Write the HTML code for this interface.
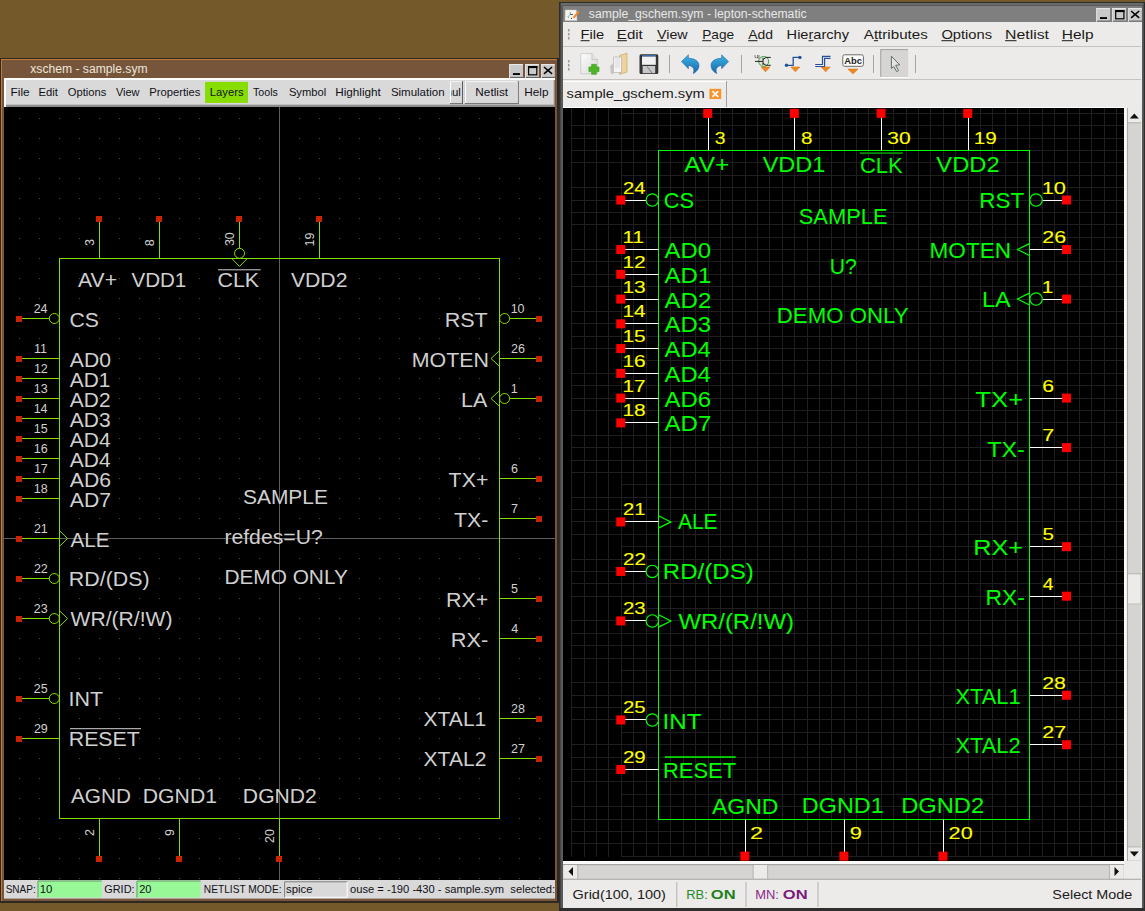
<!DOCTYPE html>
<html><head><meta charset="utf-8"><style>
html,body{margin:0;padding:0;background:#745a2a;overflow:hidden;}
svg{display:block;}
text{font-family:"Liberation Sans",sans-serif;}
</style></head><body>
<svg width="1145" height="911" viewBox="0 0 1145 911">
<rect x="0.00" y="0.00" width="1145.00" height="911.00" fill="#745a2a" />
<rect x="0.00" y="58.00" width="560.00" height="845.00" fill="#2e2822" />
<rect x="1.00" y="59.00" width="556.00" height="842.00" fill="#c27a36" />
<rect x="2.00" y="60.00" width="555.00" height="841.00" fill="#76553a" />
<text transform="matrix(0.9717,0,0,1,30.26,73.20)" font-size="12.5" fill="#ece6dc" font-weight="normal" font-family="Liberation Sans" >xschem - sample.sym</text>
<rect x="509.10" y="64.10" width="13.90" height="13.80" fill="#c9c9c9" />
<rect x="509.10" y="64.10" width="13.90" height="1.00" fill="#ececec" />
<rect x="509.10" y="64.10" width="1.00" height="13.80" fill="#e2e2e2" />
<rect x="510.10" y="76.90" width="12.90" height="1.00" fill="#5a5a5a" />
<rect x="512.90" y="73.10" width="7.00" height="1.90" fill="#000" />
<rect x="525.00" y="64.10" width="13.90" height="13.80" fill="#c9c9c9" />
<rect x="525.00" y="64.10" width="13.90" height="1.00" fill="#ececec" />
<rect x="525.00" y="64.10" width="1.00" height="13.80" fill="#e2e2e2" />
<rect x="526.00" y="76.90" width="12.90" height="1.00" fill="#5a5a5a" />
<rect x="528.60" y="66.60" width="8.20" height="8.20" fill="none" stroke="#000" stroke-width="1.2"/>
<rect x="528.00" y="66.00" width="9.40" height="2.10" fill="#000" />
<rect x="541.10" y="64.10" width="13.70" height="13.80" fill="#c9c9c9" />
<rect x="541.10" y="64.10" width="13.70" height="1.00" fill="#ececec" />
<rect x="541.10" y="64.10" width="1.00" height="13.80" fill="#e2e2e2" />
<rect x="542.10" y="76.90" width="12.70" height="1.00" fill="#5a5a5a" />
<path d="M544.00 67.00 L552.10 73.90 M552.10 67.00 L544.00 73.90" stroke="#000" stroke-width="1.6"/>
<rect x="4.00" y="78.00" width="551.00" height="29.00" fill="#ffffff" />
<rect x="6.00" y="80.00" width="549.00" height="27.00" fill="#8c8c8c" />
<rect x="6.00" y="80.00" width="547.70" height="24.70" fill="#d9d9d9" />
<text transform="matrix(1.0397,0,0,1,10.53,95.70)" font-size="11.4" fill="#101018" font-weight="normal" font-family="Liberation Sans" >File</text>
<text transform="matrix(0.9879,0,0,1,38.58,95.70)" font-size="11.4" fill="#101018" font-weight="normal" font-family="Liberation Sans" >Edit</text>
<text transform="matrix(0.9782,0,0,1,67.87,95.70)" font-size="11.4" fill="#101018" font-weight="normal" font-family="Liberation Sans" >Options</text>
<text transform="matrix(0.9641,0,0,1,115.95,95.70)" font-size="11.4" fill="#101018" font-weight="normal" font-family="Liberation Sans" >View</text>
<text transform="matrix(0.9860,0,0,1,149.28,95.70)" font-size="11.4" fill="#101018" font-weight="normal" font-family="Liberation Sans" >Properties</text>
<text transform="matrix(0.9299,0,0,1,253.06,95.70)" font-size="11.4" fill="#101018" font-weight="normal" font-family="Liberation Sans" >Tools</text>
<text transform="matrix(0.9855,0,0,1,288.89,95.70)" font-size="11.4" fill="#101018" font-weight="normal" font-family="Liberation Sans" >Symbol</text>
<text transform="matrix(1.0291,0,0,1,335.24,95.70)" font-size="11.4" fill="#101018" font-weight="normal" font-family="Liberation Sans" >Highlight</text>
<text transform="matrix(1.0102,0,0,1,390.88,95.70)" font-size="11.4" fill="#101018" font-weight="normal" font-family="Liberation Sans" >Simulation</text>
<text transform="matrix(1.0349,0,0,1,524.23,95.70)" font-size="11.4" fill="#101018" font-weight="normal" font-family="Liberation Sans" >Help</text>
<rect x="205.00" y="81.90" width="43.00" height="21.00" fill="#88dd00" />
<text transform="matrix(0.9888,0,0,1,209.78,95.70)" font-size="11.4" fill="#101018" font-weight="normal" font-family="Liberation Sans" >Layers</text>
<rect x="450.00" y="81.10" width="13.00" height="23.00" fill="#5c5c5c" />
<rect x="450.00" y="81.10" width="12.00" height="22.00" fill="#ffffff" />
<rect x="451.00" y="82.10" width="11.00" height="21.00" fill="#d9d9d9" />
<svg x="451" y="82" width="10.5" height="20"><text x="-8.5" y="13.7" font-size="11.4" fill="#101018" font-family="Liberation Sans">mul</text></svg>
<rect x="464.90" y="81.10" width="53.80" height="23.00" fill="#5c5c5c" />
<rect x="464.90" y="81.10" width="52.80" height="22.00" fill="#ffffff" />
<rect x="465.90" y="82.10" width="51.80" height="21.00" fill="#d9d9d9" />
<text transform="matrix(1.0341,0,0,1,475.33,95.70)" font-size="11.4" fill="#101018" font-weight="normal" font-family="Liberation Sans" >Netlist</text>
<rect x="4.00" y="107.00" width="551.00" height="773.00" fill="#000000" />
<path d="M19 118h1v1h-1zM19 138h1v1h-1zM19 158h1v1h-1zM19 178h1v1h-1zM19 198h1v1h-1zM19 218h1v1h-1zM19 238h1v1h-1zM19 258h1v1h-1zM19 278h1v1h-1zM19 298h1v1h-1zM19 318h1v1h-1zM19 338h1v1h-1zM19 358h1v1h-1zM19 378h1v1h-1zM19 398h1v1h-1zM19 418h1v1h-1zM19 438h1v1h-1zM19 458h1v1h-1zM19 478h1v1h-1zM19 498h1v1h-1zM19 518h1v1h-1zM19 538h1v1h-1zM19 558h1v1h-1zM19 578h1v1h-1zM19 598h1v1h-1zM19 618h1v1h-1zM19 638h1v1h-1zM19 658h1v1h-1zM19 678h1v1h-1zM19 698h1v1h-1zM19 718h1v1h-1zM19 738h1v1h-1zM19 758h1v1h-1zM19 778h1v1h-1zM19 798h1v1h-1zM19 818h1v1h-1zM19 838h1v1h-1zM19 858h1v1h-1zM19 878h1v1h-1zM39 118h1v1h-1zM39 138h1v1h-1zM39 158h1v1h-1zM39 178h1v1h-1zM39 198h1v1h-1zM39 218h1v1h-1zM39 238h1v1h-1zM39 258h1v1h-1zM39 278h1v1h-1zM39 298h1v1h-1zM39 318h1v1h-1zM39 338h1v1h-1zM39 358h1v1h-1zM39 378h1v1h-1zM39 398h1v1h-1zM39 418h1v1h-1zM39 438h1v1h-1zM39 458h1v1h-1zM39 478h1v1h-1zM39 498h1v1h-1zM39 518h1v1h-1zM39 538h1v1h-1zM39 558h1v1h-1zM39 578h1v1h-1zM39 598h1v1h-1zM39 618h1v1h-1zM39 638h1v1h-1zM39 658h1v1h-1zM39 678h1v1h-1zM39 698h1v1h-1zM39 718h1v1h-1zM39 738h1v1h-1zM39 758h1v1h-1zM39 778h1v1h-1zM39 798h1v1h-1zM39 818h1v1h-1zM39 838h1v1h-1zM39 858h1v1h-1zM39 878h1v1h-1zM59 118h1v1h-1zM59 138h1v1h-1zM59 158h1v1h-1zM59 178h1v1h-1zM59 198h1v1h-1zM59 218h1v1h-1zM59 238h1v1h-1zM59 258h1v1h-1zM59 278h1v1h-1zM59 298h1v1h-1zM59 318h1v1h-1zM59 338h1v1h-1zM59 358h1v1h-1zM59 378h1v1h-1zM59 398h1v1h-1zM59 418h1v1h-1zM59 438h1v1h-1zM59 458h1v1h-1zM59 478h1v1h-1zM59 498h1v1h-1zM59 518h1v1h-1zM59 538h1v1h-1zM59 558h1v1h-1zM59 578h1v1h-1zM59 598h1v1h-1zM59 618h1v1h-1zM59 638h1v1h-1zM59 658h1v1h-1zM59 678h1v1h-1zM59 698h1v1h-1zM59 718h1v1h-1zM59 738h1v1h-1zM59 758h1v1h-1zM59 778h1v1h-1zM59 798h1v1h-1zM59 818h1v1h-1zM59 838h1v1h-1zM59 858h1v1h-1zM59 878h1v1h-1zM79 118h1v1h-1zM79 138h1v1h-1zM79 158h1v1h-1zM79 178h1v1h-1zM79 198h1v1h-1zM79 218h1v1h-1zM79 238h1v1h-1zM79 258h1v1h-1zM79 278h1v1h-1zM79 298h1v1h-1zM79 318h1v1h-1zM79 338h1v1h-1zM79 358h1v1h-1zM79 378h1v1h-1zM79 398h1v1h-1zM79 418h1v1h-1zM79 438h1v1h-1zM79 458h1v1h-1zM79 478h1v1h-1zM79 498h1v1h-1zM79 518h1v1h-1zM79 538h1v1h-1zM79 558h1v1h-1zM79 578h1v1h-1zM79 598h1v1h-1zM79 618h1v1h-1zM79 638h1v1h-1zM79 658h1v1h-1zM79 678h1v1h-1zM79 698h1v1h-1zM79 718h1v1h-1zM79 738h1v1h-1zM79 758h1v1h-1zM79 778h1v1h-1zM79 798h1v1h-1zM79 818h1v1h-1zM79 838h1v1h-1zM79 858h1v1h-1zM79 878h1v1h-1zM99 118h1v1h-1zM99 138h1v1h-1zM99 158h1v1h-1zM99 178h1v1h-1zM99 198h1v1h-1zM99 218h1v1h-1zM99 238h1v1h-1zM99 258h1v1h-1zM99 278h1v1h-1zM99 298h1v1h-1zM99 318h1v1h-1zM99 338h1v1h-1zM99 358h1v1h-1zM99 378h1v1h-1zM99 398h1v1h-1zM99 418h1v1h-1zM99 438h1v1h-1zM99 458h1v1h-1zM99 478h1v1h-1zM99 498h1v1h-1zM99 518h1v1h-1zM99 538h1v1h-1zM99 558h1v1h-1zM99 578h1v1h-1zM99 598h1v1h-1zM99 618h1v1h-1zM99 638h1v1h-1zM99 658h1v1h-1zM99 678h1v1h-1zM99 698h1v1h-1zM99 718h1v1h-1zM99 738h1v1h-1zM99 758h1v1h-1zM99 778h1v1h-1zM99 798h1v1h-1zM99 818h1v1h-1zM99 838h1v1h-1zM99 858h1v1h-1zM99 878h1v1h-1zM119 118h1v1h-1zM119 138h1v1h-1zM119 158h1v1h-1zM119 178h1v1h-1zM119 198h1v1h-1zM119 218h1v1h-1zM119 238h1v1h-1zM119 258h1v1h-1zM119 278h1v1h-1zM119 298h1v1h-1zM119 318h1v1h-1zM119 338h1v1h-1zM119 358h1v1h-1zM119 378h1v1h-1zM119 398h1v1h-1zM119 418h1v1h-1zM119 438h1v1h-1zM119 458h1v1h-1zM119 478h1v1h-1zM119 498h1v1h-1zM119 518h1v1h-1zM119 538h1v1h-1zM119 558h1v1h-1zM119 578h1v1h-1zM119 598h1v1h-1zM119 618h1v1h-1zM119 638h1v1h-1zM119 658h1v1h-1zM119 678h1v1h-1zM119 698h1v1h-1zM119 718h1v1h-1zM119 738h1v1h-1zM119 758h1v1h-1zM119 778h1v1h-1zM119 798h1v1h-1zM119 818h1v1h-1zM119 838h1v1h-1zM119 858h1v1h-1zM119 878h1v1h-1zM139 118h1v1h-1zM139 138h1v1h-1zM139 158h1v1h-1zM139 178h1v1h-1zM139 198h1v1h-1zM139 218h1v1h-1zM139 238h1v1h-1zM139 258h1v1h-1zM139 278h1v1h-1zM139 298h1v1h-1zM139 318h1v1h-1zM139 338h1v1h-1zM139 358h1v1h-1zM139 378h1v1h-1zM139 398h1v1h-1zM139 418h1v1h-1zM139 438h1v1h-1zM139 458h1v1h-1zM139 478h1v1h-1zM139 498h1v1h-1zM139 518h1v1h-1zM139 538h1v1h-1zM139 558h1v1h-1zM139 578h1v1h-1zM139 598h1v1h-1zM139 618h1v1h-1zM139 638h1v1h-1zM139 658h1v1h-1zM139 678h1v1h-1zM139 698h1v1h-1zM139 718h1v1h-1zM139 738h1v1h-1zM139 758h1v1h-1zM139 778h1v1h-1zM139 798h1v1h-1zM139 818h1v1h-1zM139 838h1v1h-1zM139 858h1v1h-1zM139 878h1v1h-1zM159 118h1v1h-1zM159 138h1v1h-1zM159 158h1v1h-1zM159 178h1v1h-1zM159 198h1v1h-1zM159 218h1v1h-1zM159 238h1v1h-1zM159 258h1v1h-1zM159 278h1v1h-1zM159 298h1v1h-1zM159 318h1v1h-1zM159 338h1v1h-1zM159 358h1v1h-1zM159 378h1v1h-1zM159 398h1v1h-1zM159 418h1v1h-1zM159 438h1v1h-1zM159 458h1v1h-1zM159 478h1v1h-1zM159 498h1v1h-1zM159 518h1v1h-1zM159 538h1v1h-1zM159 558h1v1h-1zM159 578h1v1h-1zM159 598h1v1h-1zM159 618h1v1h-1zM159 638h1v1h-1zM159 658h1v1h-1zM159 678h1v1h-1zM159 698h1v1h-1zM159 718h1v1h-1zM159 738h1v1h-1zM159 758h1v1h-1zM159 778h1v1h-1zM159 798h1v1h-1zM159 818h1v1h-1zM159 838h1v1h-1zM159 858h1v1h-1zM159 878h1v1h-1zM179 118h1v1h-1zM179 138h1v1h-1zM179 158h1v1h-1zM179 178h1v1h-1zM179 198h1v1h-1zM179 218h1v1h-1zM179 238h1v1h-1zM179 258h1v1h-1zM179 278h1v1h-1zM179 298h1v1h-1zM179 318h1v1h-1zM179 338h1v1h-1zM179 358h1v1h-1zM179 378h1v1h-1zM179 398h1v1h-1zM179 418h1v1h-1zM179 438h1v1h-1zM179 458h1v1h-1zM179 478h1v1h-1zM179 498h1v1h-1zM179 518h1v1h-1zM179 538h1v1h-1zM179 558h1v1h-1zM179 578h1v1h-1zM179 598h1v1h-1zM179 618h1v1h-1zM179 638h1v1h-1zM179 658h1v1h-1zM179 678h1v1h-1zM179 698h1v1h-1zM179 718h1v1h-1zM179 738h1v1h-1zM179 758h1v1h-1zM179 778h1v1h-1zM179 798h1v1h-1zM179 818h1v1h-1zM179 838h1v1h-1zM179 858h1v1h-1zM179 878h1v1h-1zM199 118h1v1h-1zM199 138h1v1h-1zM199 158h1v1h-1zM199 178h1v1h-1zM199 198h1v1h-1zM199 218h1v1h-1zM199 238h1v1h-1zM199 258h1v1h-1zM199 278h1v1h-1zM199 298h1v1h-1zM199 318h1v1h-1zM199 338h1v1h-1zM199 358h1v1h-1zM199 378h1v1h-1zM199 398h1v1h-1zM199 418h1v1h-1zM199 438h1v1h-1zM199 458h1v1h-1zM199 478h1v1h-1zM199 498h1v1h-1zM199 518h1v1h-1zM199 538h1v1h-1zM199 558h1v1h-1zM199 578h1v1h-1zM199 598h1v1h-1zM199 618h1v1h-1zM199 638h1v1h-1zM199 658h1v1h-1zM199 678h1v1h-1zM199 698h1v1h-1zM199 718h1v1h-1zM199 738h1v1h-1zM199 758h1v1h-1zM199 778h1v1h-1zM199 798h1v1h-1zM199 818h1v1h-1zM199 838h1v1h-1zM199 858h1v1h-1zM199 878h1v1h-1zM219 118h1v1h-1zM219 138h1v1h-1zM219 158h1v1h-1zM219 178h1v1h-1zM219 198h1v1h-1zM219 218h1v1h-1zM219 238h1v1h-1zM219 258h1v1h-1zM219 278h1v1h-1zM219 298h1v1h-1zM219 318h1v1h-1zM219 338h1v1h-1zM219 358h1v1h-1zM219 378h1v1h-1zM219 398h1v1h-1zM219 418h1v1h-1zM219 438h1v1h-1zM219 458h1v1h-1zM219 478h1v1h-1zM219 498h1v1h-1zM219 518h1v1h-1zM219 538h1v1h-1zM219 558h1v1h-1zM219 578h1v1h-1zM219 598h1v1h-1zM219 618h1v1h-1zM219 638h1v1h-1zM219 658h1v1h-1zM219 678h1v1h-1zM219 698h1v1h-1zM219 718h1v1h-1zM219 738h1v1h-1zM219 758h1v1h-1zM219 778h1v1h-1zM219 798h1v1h-1zM219 818h1v1h-1zM219 838h1v1h-1zM219 858h1v1h-1zM219 878h1v1h-1zM239 118h1v1h-1zM239 138h1v1h-1zM239 158h1v1h-1zM239 178h1v1h-1zM239 198h1v1h-1zM239 218h1v1h-1zM239 238h1v1h-1zM239 258h1v1h-1zM239 278h1v1h-1zM239 298h1v1h-1zM239 318h1v1h-1zM239 338h1v1h-1zM239 358h1v1h-1zM239 378h1v1h-1zM239 398h1v1h-1zM239 418h1v1h-1zM239 438h1v1h-1zM239 458h1v1h-1zM239 478h1v1h-1zM239 498h1v1h-1zM239 518h1v1h-1zM239 538h1v1h-1zM239 558h1v1h-1zM239 578h1v1h-1zM239 598h1v1h-1zM239 618h1v1h-1zM239 638h1v1h-1zM239 658h1v1h-1zM239 678h1v1h-1zM239 698h1v1h-1zM239 718h1v1h-1zM239 738h1v1h-1zM239 758h1v1h-1zM239 778h1v1h-1zM239 798h1v1h-1zM239 818h1v1h-1zM239 838h1v1h-1zM239 858h1v1h-1zM239 878h1v1h-1zM259 118h1v1h-1zM259 138h1v1h-1zM259 158h1v1h-1zM259 178h1v1h-1zM259 198h1v1h-1zM259 218h1v1h-1zM259 238h1v1h-1zM259 258h1v1h-1zM259 278h1v1h-1zM259 298h1v1h-1zM259 318h1v1h-1zM259 338h1v1h-1zM259 358h1v1h-1zM259 378h1v1h-1zM259 398h1v1h-1zM259 418h1v1h-1zM259 438h1v1h-1zM259 458h1v1h-1zM259 478h1v1h-1zM259 498h1v1h-1zM259 518h1v1h-1zM259 538h1v1h-1zM259 558h1v1h-1zM259 578h1v1h-1zM259 598h1v1h-1zM259 618h1v1h-1zM259 638h1v1h-1zM259 658h1v1h-1zM259 678h1v1h-1zM259 698h1v1h-1zM259 718h1v1h-1zM259 738h1v1h-1zM259 758h1v1h-1zM259 778h1v1h-1zM259 798h1v1h-1zM259 818h1v1h-1zM259 838h1v1h-1zM259 858h1v1h-1zM259 878h1v1h-1zM279 118h1v1h-1zM279 138h1v1h-1zM279 158h1v1h-1zM279 178h1v1h-1zM279 198h1v1h-1zM279 218h1v1h-1zM279 238h1v1h-1zM279 258h1v1h-1zM279 278h1v1h-1zM279 298h1v1h-1zM279 318h1v1h-1zM279 338h1v1h-1zM279 358h1v1h-1zM279 378h1v1h-1zM279 398h1v1h-1zM279 418h1v1h-1zM279 438h1v1h-1zM279 458h1v1h-1zM279 478h1v1h-1zM279 498h1v1h-1zM279 518h1v1h-1zM279 538h1v1h-1zM279 558h1v1h-1zM279 578h1v1h-1zM279 598h1v1h-1zM279 618h1v1h-1zM279 638h1v1h-1zM279 658h1v1h-1zM279 678h1v1h-1zM279 698h1v1h-1zM279 718h1v1h-1zM279 738h1v1h-1zM279 758h1v1h-1zM279 778h1v1h-1zM279 798h1v1h-1zM279 818h1v1h-1zM279 838h1v1h-1zM279 858h1v1h-1zM279 878h1v1h-1zM299 118h1v1h-1zM299 138h1v1h-1zM299 158h1v1h-1zM299 178h1v1h-1zM299 198h1v1h-1zM299 218h1v1h-1zM299 238h1v1h-1zM299 258h1v1h-1zM299 278h1v1h-1zM299 298h1v1h-1zM299 318h1v1h-1zM299 338h1v1h-1zM299 358h1v1h-1zM299 378h1v1h-1zM299 398h1v1h-1zM299 418h1v1h-1zM299 438h1v1h-1zM299 458h1v1h-1zM299 478h1v1h-1zM299 498h1v1h-1zM299 518h1v1h-1zM299 538h1v1h-1zM299 558h1v1h-1zM299 578h1v1h-1zM299 598h1v1h-1zM299 618h1v1h-1zM299 638h1v1h-1zM299 658h1v1h-1zM299 678h1v1h-1zM299 698h1v1h-1zM299 718h1v1h-1zM299 738h1v1h-1zM299 758h1v1h-1zM299 778h1v1h-1zM299 798h1v1h-1zM299 818h1v1h-1zM299 838h1v1h-1zM299 858h1v1h-1zM299 878h1v1h-1zM319 118h1v1h-1zM319 138h1v1h-1zM319 158h1v1h-1zM319 178h1v1h-1zM319 198h1v1h-1zM319 218h1v1h-1zM319 238h1v1h-1zM319 258h1v1h-1zM319 278h1v1h-1zM319 298h1v1h-1zM319 318h1v1h-1zM319 338h1v1h-1zM319 358h1v1h-1zM319 378h1v1h-1zM319 398h1v1h-1zM319 418h1v1h-1zM319 438h1v1h-1zM319 458h1v1h-1zM319 478h1v1h-1zM319 498h1v1h-1zM319 518h1v1h-1zM319 538h1v1h-1zM319 558h1v1h-1zM319 578h1v1h-1zM319 598h1v1h-1zM319 618h1v1h-1zM319 638h1v1h-1zM319 658h1v1h-1zM319 678h1v1h-1zM319 698h1v1h-1zM319 718h1v1h-1zM319 738h1v1h-1zM319 758h1v1h-1zM319 778h1v1h-1zM319 798h1v1h-1zM319 818h1v1h-1zM319 838h1v1h-1zM319 858h1v1h-1zM319 878h1v1h-1zM339 118h1v1h-1zM339 138h1v1h-1zM339 158h1v1h-1zM339 178h1v1h-1zM339 198h1v1h-1zM339 218h1v1h-1zM339 238h1v1h-1zM339 258h1v1h-1zM339 278h1v1h-1zM339 298h1v1h-1zM339 318h1v1h-1zM339 338h1v1h-1zM339 358h1v1h-1zM339 378h1v1h-1zM339 398h1v1h-1zM339 418h1v1h-1zM339 438h1v1h-1zM339 458h1v1h-1zM339 478h1v1h-1zM339 498h1v1h-1zM339 518h1v1h-1zM339 538h1v1h-1zM339 558h1v1h-1zM339 578h1v1h-1zM339 598h1v1h-1zM339 618h1v1h-1zM339 638h1v1h-1zM339 658h1v1h-1zM339 678h1v1h-1zM339 698h1v1h-1zM339 718h1v1h-1zM339 738h1v1h-1zM339 758h1v1h-1zM339 778h1v1h-1zM339 798h1v1h-1zM339 818h1v1h-1zM339 838h1v1h-1zM339 858h1v1h-1zM339 878h1v1h-1zM359 118h1v1h-1zM359 138h1v1h-1zM359 158h1v1h-1zM359 178h1v1h-1zM359 198h1v1h-1zM359 218h1v1h-1zM359 238h1v1h-1zM359 258h1v1h-1zM359 278h1v1h-1zM359 298h1v1h-1zM359 318h1v1h-1zM359 338h1v1h-1zM359 358h1v1h-1zM359 378h1v1h-1zM359 398h1v1h-1zM359 418h1v1h-1zM359 438h1v1h-1zM359 458h1v1h-1zM359 478h1v1h-1zM359 498h1v1h-1zM359 518h1v1h-1zM359 538h1v1h-1zM359 558h1v1h-1zM359 578h1v1h-1zM359 598h1v1h-1zM359 618h1v1h-1zM359 638h1v1h-1zM359 658h1v1h-1zM359 678h1v1h-1zM359 698h1v1h-1zM359 718h1v1h-1zM359 738h1v1h-1zM359 758h1v1h-1zM359 778h1v1h-1zM359 798h1v1h-1zM359 818h1v1h-1zM359 838h1v1h-1zM359 858h1v1h-1zM359 878h1v1h-1zM379 118h1v1h-1zM379 138h1v1h-1zM379 158h1v1h-1zM379 178h1v1h-1zM379 198h1v1h-1zM379 218h1v1h-1zM379 238h1v1h-1zM379 258h1v1h-1zM379 278h1v1h-1zM379 298h1v1h-1zM379 318h1v1h-1zM379 338h1v1h-1zM379 358h1v1h-1zM379 378h1v1h-1zM379 398h1v1h-1zM379 418h1v1h-1zM379 438h1v1h-1zM379 458h1v1h-1zM379 478h1v1h-1zM379 498h1v1h-1zM379 518h1v1h-1zM379 538h1v1h-1zM379 558h1v1h-1zM379 578h1v1h-1zM379 598h1v1h-1zM379 618h1v1h-1zM379 638h1v1h-1zM379 658h1v1h-1zM379 678h1v1h-1zM379 698h1v1h-1zM379 718h1v1h-1zM379 738h1v1h-1zM379 758h1v1h-1zM379 778h1v1h-1zM379 798h1v1h-1zM379 818h1v1h-1zM379 838h1v1h-1zM379 858h1v1h-1zM379 878h1v1h-1zM399 118h1v1h-1zM399 138h1v1h-1zM399 158h1v1h-1zM399 178h1v1h-1zM399 198h1v1h-1zM399 218h1v1h-1zM399 238h1v1h-1zM399 258h1v1h-1zM399 278h1v1h-1zM399 298h1v1h-1zM399 318h1v1h-1zM399 338h1v1h-1zM399 358h1v1h-1zM399 378h1v1h-1zM399 398h1v1h-1zM399 418h1v1h-1zM399 438h1v1h-1zM399 458h1v1h-1zM399 478h1v1h-1zM399 498h1v1h-1zM399 518h1v1h-1zM399 538h1v1h-1zM399 558h1v1h-1zM399 578h1v1h-1zM399 598h1v1h-1zM399 618h1v1h-1zM399 638h1v1h-1zM399 658h1v1h-1zM399 678h1v1h-1zM399 698h1v1h-1zM399 718h1v1h-1zM399 738h1v1h-1zM399 758h1v1h-1zM399 778h1v1h-1zM399 798h1v1h-1zM399 818h1v1h-1zM399 838h1v1h-1zM399 858h1v1h-1zM399 878h1v1h-1zM419 118h1v1h-1zM419 138h1v1h-1zM419 158h1v1h-1zM419 178h1v1h-1zM419 198h1v1h-1zM419 218h1v1h-1zM419 238h1v1h-1zM419 258h1v1h-1zM419 278h1v1h-1zM419 298h1v1h-1zM419 318h1v1h-1zM419 338h1v1h-1zM419 358h1v1h-1zM419 378h1v1h-1zM419 398h1v1h-1zM419 418h1v1h-1zM419 438h1v1h-1zM419 458h1v1h-1zM419 478h1v1h-1zM419 498h1v1h-1zM419 518h1v1h-1zM419 538h1v1h-1zM419 558h1v1h-1zM419 578h1v1h-1zM419 598h1v1h-1zM419 618h1v1h-1zM419 638h1v1h-1zM419 658h1v1h-1zM419 678h1v1h-1zM419 698h1v1h-1zM419 718h1v1h-1zM419 738h1v1h-1zM419 758h1v1h-1zM419 778h1v1h-1zM419 798h1v1h-1zM419 818h1v1h-1zM419 838h1v1h-1zM419 858h1v1h-1zM419 878h1v1h-1zM439 118h1v1h-1zM439 138h1v1h-1zM439 158h1v1h-1zM439 178h1v1h-1zM439 198h1v1h-1zM439 218h1v1h-1zM439 238h1v1h-1zM439 258h1v1h-1zM439 278h1v1h-1zM439 298h1v1h-1zM439 318h1v1h-1zM439 338h1v1h-1zM439 358h1v1h-1zM439 378h1v1h-1zM439 398h1v1h-1zM439 418h1v1h-1zM439 438h1v1h-1zM439 458h1v1h-1zM439 478h1v1h-1zM439 498h1v1h-1zM439 518h1v1h-1zM439 538h1v1h-1zM439 558h1v1h-1zM439 578h1v1h-1zM439 598h1v1h-1zM439 618h1v1h-1zM439 638h1v1h-1zM439 658h1v1h-1zM439 678h1v1h-1zM439 698h1v1h-1zM439 718h1v1h-1zM439 738h1v1h-1zM439 758h1v1h-1zM439 778h1v1h-1zM439 798h1v1h-1zM439 818h1v1h-1zM439 838h1v1h-1zM439 858h1v1h-1zM439 878h1v1h-1zM459 118h1v1h-1zM459 138h1v1h-1zM459 158h1v1h-1zM459 178h1v1h-1zM459 198h1v1h-1zM459 218h1v1h-1zM459 238h1v1h-1zM459 258h1v1h-1zM459 278h1v1h-1zM459 298h1v1h-1zM459 318h1v1h-1zM459 338h1v1h-1zM459 358h1v1h-1zM459 378h1v1h-1zM459 398h1v1h-1zM459 418h1v1h-1zM459 438h1v1h-1zM459 458h1v1h-1zM459 478h1v1h-1zM459 498h1v1h-1zM459 518h1v1h-1zM459 538h1v1h-1zM459 558h1v1h-1zM459 578h1v1h-1zM459 598h1v1h-1zM459 618h1v1h-1zM459 638h1v1h-1zM459 658h1v1h-1zM459 678h1v1h-1zM459 698h1v1h-1zM459 718h1v1h-1zM459 738h1v1h-1zM459 758h1v1h-1zM459 778h1v1h-1zM459 798h1v1h-1zM459 818h1v1h-1zM459 838h1v1h-1zM459 858h1v1h-1zM459 878h1v1h-1zM479 118h1v1h-1zM479 138h1v1h-1zM479 158h1v1h-1zM479 178h1v1h-1zM479 198h1v1h-1zM479 218h1v1h-1zM479 238h1v1h-1zM479 258h1v1h-1zM479 278h1v1h-1zM479 298h1v1h-1zM479 318h1v1h-1zM479 338h1v1h-1zM479 358h1v1h-1zM479 378h1v1h-1zM479 398h1v1h-1zM479 418h1v1h-1zM479 438h1v1h-1zM479 458h1v1h-1zM479 478h1v1h-1zM479 498h1v1h-1zM479 518h1v1h-1zM479 538h1v1h-1zM479 558h1v1h-1zM479 578h1v1h-1zM479 598h1v1h-1zM479 618h1v1h-1zM479 638h1v1h-1zM479 658h1v1h-1zM479 678h1v1h-1zM479 698h1v1h-1zM479 718h1v1h-1zM479 738h1v1h-1zM479 758h1v1h-1zM479 778h1v1h-1zM479 798h1v1h-1zM479 818h1v1h-1zM479 838h1v1h-1zM479 858h1v1h-1zM479 878h1v1h-1zM499 118h1v1h-1zM499 138h1v1h-1zM499 158h1v1h-1zM499 178h1v1h-1zM499 198h1v1h-1zM499 218h1v1h-1zM499 238h1v1h-1zM499 258h1v1h-1zM499 278h1v1h-1zM499 298h1v1h-1zM499 318h1v1h-1zM499 338h1v1h-1zM499 358h1v1h-1zM499 378h1v1h-1zM499 398h1v1h-1zM499 418h1v1h-1zM499 438h1v1h-1zM499 458h1v1h-1zM499 478h1v1h-1zM499 498h1v1h-1zM499 518h1v1h-1zM499 538h1v1h-1zM499 558h1v1h-1zM499 578h1v1h-1zM499 598h1v1h-1zM499 618h1v1h-1zM499 638h1v1h-1zM499 658h1v1h-1zM499 678h1v1h-1zM499 698h1v1h-1zM499 718h1v1h-1zM499 738h1v1h-1zM499 758h1v1h-1zM499 778h1v1h-1zM499 798h1v1h-1zM499 818h1v1h-1zM499 838h1v1h-1zM499 858h1v1h-1zM499 878h1v1h-1zM519 118h1v1h-1zM519 138h1v1h-1zM519 158h1v1h-1zM519 178h1v1h-1zM519 198h1v1h-1zM519 218h1v1h-1zM519 238h1v1h-1zM519 258h1v1h-1zM519 278h1v1h-1zM519 298h1v1h-1zM519 318h1v1h-1zM519 338h1v1h-1zM519 358h1v1h-1zM519 378h1v1h-1zM519 398h1v1h-1zM519 418h1v1h-1zM519 438h1v1h-1zM519 458h1v1h-1zM519 478h1v1h-1zM519 498h1v1h-1zM519 518h1v1h-1zM519 538h1v1h-1zM519 558h1v1h-1zM519 578h1v1h-1zM519 598h1v1h-1zM519 618h1v1h-1zM519 638h1v1h-1zM519 658h1v1h-1zM519 678h1v1h-1zM519 698h1v1h-1zM519 718h1v1h-1zM519 738h1v1h-1zM519 758h1v1h-1zM519 778h1v1h-1zM519 798h1v1h-1zM519 818h1v1h-1zM519 838h1v1h-1zM519 858h1v1h-1zM519 878h1v1h-1zM539 118h1v1h-1zM539 138h1v1h-1zM539 158h1v1h-1zM539 178h1v1h-1zM539 198h1v1h-1zM539 218h1v1h-1zM539 238h1v1h-1zM539 258h1v1h-1zM539 278h1v1h-1zM539 298h1v1h-1zM539 318h1v1h-1zM539 338h1v1h-1zM539 358h1v1h-1zM539 378h1v1h-1zM539 398h1v1h-1zM539 418h1v1h-1zM539 438h1v1h-1zM539 458h1v1h-1zM539 478h1v1h-1zM539 498h1v1h-1zM539 518h1v1h-1zM539 538h1v1h-1zM539 558h1v1h-1zM539 578h1v1h-1zM539 598h1v1h-1zM539 618h1v1h-1zM539 638h1v1h-1zM539 658h1v1h-1zM539 678h1v1h-1zM539 698h1v1h-1zM539 718h1v1h-1zM539 738h1v1h-1zM539 758h1v1h-1zM539 778h1v1h-1zM539 798h1v1h-1zM539 818h1v1h-1zM539 838h1v1h-1zM539 858h1v1h-1zM539 878h1v1h-1z" fill="#505050"/>
<rect x="279.00" y="107.00" width="1.00" height="773.00" fill="#5e5e5e" />
<rect x="4.00" y="538.00" width="551.00" height="1.00" fill="#5e5e5e" />
<rect x="59.5" y="258.5" width="440" height="560" fill="none" stroke="#88dd00" stroke-width="1"/>
<rect x="96.00" y="216.00" width="6.00" height="6.00" fill="#cc2200" />
<line x1="99.50" y1="222.00" x2="99.50" y2="258.00" stroke="#88dd00" stroke-width="1" />
<text transform="translate(94.00,246.08) rotate(-90)" font-size="12.5" fill="#d0d0d0" font-family="Liberation Sans" >3</text>
<rect x="156.00" y="216.00" width="6.00" height="6.00" fill="#cc2200" />
<line x1="159.50" y1="222.00" x2="159.50" y2="258.00" stroke="#88dd00" stroke-width="1" />
<text transform="translate(154.00,246.14) rotate(-90)" font-size="12.5" fill="#d0d0d0" font-family="Liberation Sans" >8</text>
<rect x="236.00" y="216.00" width="6.00" height="6.00" fill="#cc2200" />
<line x1="239.50" y1="222.00" x2="239.50" y2="248.30" stroke="#88dd00" stroke-width="1" />
<circle cx="239.5" cy="253.3" r="5" fill="none" stroke="#88dd00" stroke-width="1"/>
<path d="M231.8 258.5 L239.5 266.4 L247.3 258.5" fill="none" stroke="#88dd00" stroke-width="1"/>
<text transform="translate(234.00,246.08) rotate(-90)" font-size="12.5" fill="#d0d0d0" font-family="Liberation Sans" >30</text>
<rect x="316.00" y="216.00" width="6.00" height="6.00" fill="#cc2200" />
<line x1="319.50" y1="222.00" x2="319.50" y2="258.00" stroke="#88dd00" stroke-width="1" />
<text transform="translate(314.00,246.55) rotate(-90)" font-size="12.5" fill="#d0d0d0" font-family="Liberation Sans" >19</text>
<rect x="16.00" y="316.00" width="6.00" height="6.00" fill="#cc2200" />
<line x1="22.00" y1="318.50" x2="49.30" y2="318.50" stroke="#88dd00" stroke-width="1" />
<circle cx="54.3" cy="318.5" r="5" fill="none" stroke="#88dd00" stroke-width="1"/>
<text transform="matrix(1.0000,0,0,1,33.66,313.00)" font-size="12.5" fill="#d0d0d0" font-weight="normal" font-family="Liberation Sans" >24</text>
<rect x="16.00" y="356.00" width="6.00" height="6.00" fill="#cc2200" />
<line x1="22.00" y1="358.50" x2="59.00" y2="358.50" stroke="#88dd00" stroke-width="1" />
<text transform="matrix(1.0000,0,0,1,33.91,353.00)" font-size="12.5" fill="#d0d0d0" font-weight="normal" font-family="Liberation Sans" >11</text>
<rect x="16.00" y="376.00" width="6.00" height="6.00" fill="#cc2200" />
<line x1="22.00" y1="378.50" x2="59.00" y2="378.50" stroke="#88dd00" stroke-width="1" />
<text transform="matrix(1.0000,0,0,1,33.92,373.00)" font-size="12.5" fill="#d0d0d0" font-weight="normal" font-family="Liberation Sans" >12</text>
<rect x="16.00" y="396.00" width="6.00" height="6.00" fill="#cc2200" />
<line x1="22.00" y1="398.50" x2="59.00" y2="398.50" stroke="#88dd00" stroke-width="1" />
<text transform="matrix(1.0000,0,0,1,33.85,393.00)" font-size="12.5" fill="#d0d0d0" font-weight="normal" font-family="Liberation Sans" >13</text>
<rect x="16.00" y="416.00" width="6.00" height="6.00" fill="#cc2200" />
<line x1="22.00" y1="418.50" x2="59.00" y2="418.50" stroke="#88dd00" stroke-width="1" />
<text transform="matrix(1.0000,0,0,1,33.66,413.00)" font-size="12.5" fill="#d0d0d0" font-weight="normal" font-family="Liberation Sans" >14</text>
<rect x="16.00" y="436.00" width="6.00" height="6.00" fill="#cc2200" />
<line x1="22.00" y1="438.50" x2="59.00" y2="438.50" stroke="#88dd00" stroke-width="1" />
<text transform="matrix(1.0000,0,0,1,33.82,433.00)" font-size="12.5" fill="#d0d0d0" font-weight="normal" font-family="Liberation Sans" >15</text>
<rect x="16.00" y="456.00" width="6.00" height="6.00" fill="#cc2200" />
<line x1="22.00" y1="458.50" x2="59.00" y2="458.50" stroke="#88dd00" stroke-width="1" />
<text transform="matrix(1.0000,0,0,1,33.85,453.00)" font-size="12.5" fill="#d0d0d0" font-weight="normal" font-family="Liberation Sans" >16</text>
<rect x="16.00" y="476.00" width="6.00" height="6.00" fill="#cc2200" />
<line x1="22.00" y1="478.50" x2="59.00" y2="478.50" stroke="#88dd00" stroke-width="1" />
<text transform="matrix(1.0000,0,0,1,33.92,473.00)" font-size="12.5" fill="#d0d0d0" font-weight="normal" font-family="Liberation Sans" >17</text>
<rect x="16.00" y="496.00" width="6.00" height="6.00" fill="#cc2200" />
<line x1="22.00" y1="498.50" x2="59.00" y2="498.50" stroke="#88dd00" stroke-width="1" />
<text transform="matrix(1.0000,0,0,1,33.84,493.00)" font-size="12.5" fill="#d0d0d0" font-weight="normal" font-family="Liberation Sans" >18</text>
<rect x="16.00" y="536.00" width="6.00" height="6.00" fill="#cc2200" />
<line x1="22.00" y1="538.50" x2="59.00" y2="538.50" stroke="#88dd00" stroke-width="1" />
<path d="M59.5 530.7 L67.5 538.5 L59.5 546.3" fill="none" stroke="#88dd00" stroke-width="1"/>
<text transform="matrix(1.0000,0,0,1,33.91,533.00)" font-size="12.5" fill="#d0d0d0" font-weight="normal" font-family="Liberation Sans" >21</text>
<rect x="16.00" y="576.00" width="6.00" height="6.00" fill="#cc2200" />
<line x1="22.00" y1="578.50" x2="49.30" y2="578.50" stroke="#88dd00" stroke-width="1" />
<circle cx="54.3" cy="578.5" r="5" fill="none" stroke="#88dd00" stroke-width="1"/>
<text transform="matrix(1.0000,0,0,1,33.92,573.00)" font-size="12.5" fill="#d0d0d0" font-weight="normal" font-family="Liberation Sans" >22</text>
<rect x="16.00" y="616.00" width="6.00" height="6.00" fill="#cc2200" />
<line x1="22.00" y1="618.50" x2="49.30" y2="618.50" stroke="#88dd00" stroke-width="1" />
<circle cx="54.3" cy="618.5" r="5" fill="none" stroke="#88dd00" stroke-width="1"/>
<path d="M59.5 610.7 L67.5 618.5 L59.5 626.3" fill="none" stroke="#88dd00" stroke-width="1"/>
<text transform="matrix(1.0000,0,0,1,33.85,613.00)" font-size="12.5" fill="#d0d0d0" font-weight="normal" font-family="Liberation Sans" >23</text>
<rect x="16.00" y="696.00" width="6.00" height="6.00" fill="#cc2200" />
<line x1="22.00" y1="698.50" x2="49.30" y2="698.50" stroke="#88dd00" stroke-width="1" />
<circle cx="54.3" cy="698.5" r="5" fill="none" stroke="#88dd00" stroke-width="1"/>
<text transform="matrix(1.0000,0,0,1,33.82,693.00)" font-size="12.5" fill="#d0d0d0" font-weight="normal" font-family="Liberation Sans" >25</text>
<rect x="16.00" y="736.00" width="6.00" height="6.00" fill="#cc2200" />
<line x1="22.00" y1="738.50" x2="59.00" y2="738.50" stroke="#88dd00" stroke-width="1" />
<text transform="matrix(1.0000,0,0,1,33.89,733.00)" font-size="12.5" fill="#d0d0d0" font-weight="normal" font-family="Liberation Sans" >29</text>
<rect x="536.00" y="316.00" width="6.00" height="6.00" fill="#cc2200" />
<line x1="509.60" y1="318.50" x2="536.00" y2="318.50" stroke="#88dd00" stroke-width="1" />
<circle cx="504.6" cy="318.5" r="5" fill="none" stroke="#88dd00" stroke-width="1"/>
<text transform="matrix(1.0000,0,0,1,510.65,313.00)" font-size="12.5" fill="#d0d0d0" font-weight="normal" font-family="Liberation Sans" >10</text>
<rect x="536.00" y="356.00" width="6.00" height="6.00" fill="#cc2200" />
<line x1="499.00" y1="358.50" x2="536.00" y2="358.50" stroke="#88dd00" stroke-width="1" />
<path d="M499.5 350.7 L491 358.5 L499.5 366.3" fill="none" stroke="#88dd00" stroke-width="1"/>
<text transform="matrix(1.0000,0,0,1,510.97,353.00)" font-size="12.5" fill="#d0d0d0" font-weight="normal" font-family="Liberation Sans" >26</text>
<rect x="536.00" y="396.00" width="6.00" height="6.00" fill="#cc2200" />
<line x1="509.60" y1="398.50" x2="536.00" y2="398.50" stroke="#88dd00" stroke-width="1" />
<circle cx="504.6" cy="398.5" r="5" fill="none" stroke="#88dd00" stroke-width="1"/>
<path d="M499.5 390.7 L491 398.5 L499.5 406.3" fill="none" stroke="#88dd00" stroke-width="1"/>
<text transform="matrix(1.0000,0,0,1,510.65,393.00)" font-size="12.5" fill="#d0d0d0" font-weight="normal" font-family="Liberation Sans" >1</text>
<rect x="536.00" y="476.00" width="6.00" height="6.00" fill="#cc2200" />
<line x1="499.00" y1="478.50" x2="536.00" y2="478.50" stroke="#88dd00" stroke-width="1" />
<text transform="matrix(1.0000,0,0,1,510.97,473.00)" font-size="12.5" fill="#d0d0d0" font-weight="normal" font-family="Liberation Sans" >6</text>
<rect x="536.00" y="516.00" width="6.00" height="6.00" fill="#cc2200" />
<line x1="499.00" y1="518.50" x2="536.00" y2="518.50" stroke="#88dd00" stroke-width="1" />
<text transform="matrix(1.0000,0,0,1,510.96,513.00)" font-size="12.5" fill="#d0d0d0" font-weight="normal" font-family="Liberation Sans" >7</text>
<rect x="536.00" y="596.00" width="6.00" height="6.00" fill="#cc2200" />
<line x1="499.00" y1="598.50" x2="536.00" y2="598.50" stroke="#88dd00" stroke-width="1" />
<text transform="matrix(1.0000,0,0,1,511.10,593.00)" font-size="12.5" fill="#d0d0d0" font-weight="normal" font-family="Liberation Sans" >5</text>
<rect x="536.00" y="636.00" width="6.00" height="6.00" fill="#cc2200" />
<line x1="499.00" y1="638.50" x2="536.00" y2="638.50" stroke="#88dd00" stroke-width="1" />
<text transform="matrix(1.0000,0,0,1,511.31,633.00)" font-size="12.5" fill="#d0d0d0" font-weight="normal" font-family="Liberation Sans" >4</text>
<rect x="536.00" y="716.00" width="6.00" height="6.00" fill="#cc2200" />
<line x1="499.00" y1="718.50" x2="536.00" y2="718.50" stroke="#88dd00" stroke-width="1" />
<text transform="matrix(1.0000,0,0,1,510.97,713.00)" font-size="12.5" fill="#d0d0d0" font-weight="normal" font-family="Liberation Sans" >28</text>
<rect x="536.00" y="756.00" width="6.00" height="6.00" fill="#cc2200" />
<line x1="499.00" y1="758.50" x2="536.00" y2="758.50" stroke="#88dd00" stroke-width="1" />
<text transform="matrix(1.0000,0,0,1,510.97,753.00)" font-size="12.5" fill="#d0d0d0" font-weight="normal" font-family="Liberation Sans" >27</text>
<rect x="96.00" y="856.00" width="6.00" height="6.00" fill="#cc2200" />
<line x1="99.50" y1="818.00" x2="99.50" y2="856.00" stroke="#88dd00" stroke-width="1" />
<text transform="translate(94.00,835.92) rotate(-90)" font-size="12.5" fill="#d0d0d0" font-family="Liberation Sans" >2</text>
<rect x="176.00" y="856.00" width="6.00" height="6.00" fill="#cc2200" />
<line x1="179.50" y1="818.00" x2="179.50" y2="856.00" stroke="#88dd00" stroke-width="1" />
<text transform="translate(174.00,835.96) rotate(-90)" font-size="12.5" fill="#d0d0d0" font-family="Liberation Sans" >9</text>
<rect x="276.00" y="856.00" width="6.00" height="6.00" fill="#cc2200" />
<line x1="279.50" y1="818.00" x2="279.50" y2="856.00" stroke="#88dd00" stroke-width="1" />
<text transform="translate(274.00,843.02) rotate(-90)" font-size="12.5" fill="#d0d0d0" font-family="Liberation Sans" >20</text>
<text transform="matrix(1.0553,0,0,1,78.06,286.60)" font-size="20" fill="#d0d0d0" font-weight="normal" font-family="Liberation Sans" >AV+</text>
<text transform="matrix(1.0290,0,0,1,131.41,286.60)" font-size="20" fill="#d0d0d0" font-weight="normal" font-family="Liberation Sans" >VDD1</text>
<text transform="matrix(1.0699,0,0,1,217.51,286.60)" font-size="20" fill="#d0d0d0" font-weight="normal" font-family="Liberation Sans" >CLK</text>
<text transform="matrix(1.0602,0,0,1,290.91,286.60)" font-size="20" fill="#d0d0d0" font-weight="normal" font-family="Liberation Sans" >VDD2</text>
<text transform="matrix(1.0600,0,0,1,69.52,327.00)" font-size="20" fill="#d0d0d0" font-weight="normal" font-family="Liberation Sans" >CS</text>
<text transform="matrix(1.0555,0,0,1,69.86,367.20)" font-size="20" fill="#d0d0d0" font-weight="normal" font-family="Liberation Sans" >AD0</text>
<text transform="matrix(1.0451,0,0,1,69.86,387.20)" font-size="20" fill="#d0d0d0" font-weight="normal" font-family="Liberation Sans" >AD1</text>
<text transform="matrix(1.0459,0,0,1,69.86,407.20)" font-size="20" fill="#d0d0d0" font-weight="normal" font-family="Liberation Sans" >AD2</text>
<text transform="matrix(1.0503,0,0,1,69.86,427.20)" font-size="20" fill="#d0d0d0" font-weight="normal" font-family="Liberation Sans" >AD3</text>
<text transform="matrix(1.0501,0,0,1,69.86,447.20)" font-size="20" fill="#d0d0d0" font-weight="normal" font-family="Liberation Sans" >AD4</text>
<text transform="matrix(1.0501,0,0,1,69.86,467.20)" font-size="20" fill="#d0d0d0" font-weight="normal" font-family="Liberation Sans" >AD4</text>
<text transform="matrix(1.0582,0,0,1,69.86,487.20)" font-size="20" fill="#d0d0d0" font-weight="normal" font-family="Liberation Sans" >AD6</text>
<text transform="matrix(1.0618,0,0,1,69.86,507.20)" font-size="20" fill="#d0d0d0" font-weight="normal" font-family="Liberation Sans" >AD7</text>
<text transform="matrix(1.0351,0,0,1,70.56,546.50)" font-size="20" fill="#d0d0d0" font-weight="normal" font-family="Liberation Sans" >ALE</text>
<text transform="matrix(1.0693,0,0,1,68.85,586.30)" font-size="20" fill="#d0d0d0" font-weight="normal" font-family="Liberation Sans" >RD/(DS)</text>
<text transform="matrix(1.0556,0,0,1,70.51,625.80)" font-size="20" fill="#d0d0d0" font-weight="normal" font-family="Liberation Sans" >WR/(R/!W)</text>
<text transform="matrix(1.0731,0,0,1,68.62,705.60)" font-size="20" fill="#d0d0d0" font-weight="normal" font-family="Liberation Sans" >INT</text>
<text transform="matrix(1.0669,0,0,1,68.75,746.40)" font-size="20" fill="#d0d0d0" font-weight="normal" font-family="Liberation Sans" >RESET</text>
<text transform="matrix(1.0390,0,0,1,70.96,803.40)" font-size="20" fill="#d0d0d0" font-weight="normal" font-family="Liberation Sans" >AGND</text>
<text transform="matrix(1.0609,0,0,1,142.76,803.40)" font-size="20" fill="#d0d0d0" font-weight="normal" font-family="Liberation Sans" >DGND1</text>
<text transform="matrix(1.0570,0,0,1,242.87,803.40)" font-size="20" fill="#d0d0d0" font-weight="normal" font-family="Liberation Sans" >DGND2</text>
<text transform="matrix(1.0482,0,0,1,242.95,504.10)" font-size="20" fill="#d0d0d0" font-weight="normal" font-family="Liberation Sans" >SAMPLE</text>
<text transform="matrix(1.0599,0,0,1,224.39,544.00)" font-size="20" fill="#d0d0d0" font-weight="normal" font-family="Liberation Sans" >refdes=U?</text>
<text transform="matrix(1.0421,0,0,1,224.39,583.80)" font-size="20" fill="#d0d0d0" font-weight="normal" font-family="Liberation Sans" >DEMO ONLY</text>
<line x1="218.00" y1="269.80" x2="260.70" y2="269.80" stroke="#d0d0d0" stroke-width="1" />
<line x1="70.00" y1="728.70" x2="141.00" y2="728.70" stroke="#d0d0d0" stroke-width="1" />
<text transform="matrix(1.0765,0,0,1,444.73,327.00)" font-size="20" fill="#d0d0d0" font-weight="normal" font-family="Liberation Sans" >RST</text>
<text transform="matrix(1.0704,0,0,1,411.74,367.00)" font-size="20" fill="#d0d0d0" font-weight="normal" font-family="Liberation Sans" >MOTEN</text>
<text transform="matrix(1.0754,0,0,1,461.04,407.00)" font-size="20" fill="#d0d0d0" font-weight="normal" font-family="Liberation Sans" >LA</text>
<text transform="matrix(1.0670,0,0,1,448.62,487.40)" font-size="20" fill="#d0d0d0" font-weight="normal" font-family="Liberation Sans" >TX+</text>
<text transform="matrix(1.0655,0,0,1,453.92,527.40)" font-size="20" fill="#d0d0d0" font-weight="normal" font-family="Liberation Sans" >TX-</text>
<text transform="matrix(1.0723,0,0,1,446.04,607.40)" font-size="20" fill="#d0d0d0" font-weight="normal" font-family="Liberation Sans" >RX+</text>
<text transform="matrix(1.0904,0,0,1,450.71,647.40)" font-size="20" fill="#d0d0d0" font-weight="normal" font-family="Liberation Sans" >RX-</text>
<text transform="matrix(1.0533,0,0,1,423.53,725.80)" font-size="20" fill="#d0d0d0" font-weight="normal" font-family="Liberation Sans" >XTAL1</text>
<text transform="matrix(1.0538,0,0,1,423.53,765.90)" font-size="20" fill="#d0d0d0" font-weight="normal" font-family="Liberation Sans" >XTAL2</text>
<rect x="4.00" y="880.00" width="551.00" height="18.60" fill="#d9d9d9" />
<text transform="matrix(0.8978,0,0,1,5.64,892.90)" font-size="11.2" fill="#101018" font-weight="normal" font-family="Liberation Sans" >SNAP:</text>
<rect x="38.00" y="881.00" width="63.80" height="16.50" fill="#98f898" stroke="#6a8a6a" stroke-width="0"/>
<path d="M38 897.5 V881 H101.8" fill="none" stroke="#5b9b5b" stroke-width="1"/>
<text transform="matrix(1.0208,0,0,1,39.63,892.90)" font-size="11.2" fill="#101018" font-weight="normal" font-family="Liberation Sans" >10</text>
<text transform="matrix(0.9754,0,0,1,104.25,892.90)" font-size="11.2" fill="#101018" font-weight="normal" font-family="Liberation Sans" >GRID:</text>
<rect x="137.00" y="881.00" width="63.60" height="16.50" fill="#98f898" />
<path d="M137 897.5 V881 H200.6" fill="none" stroke="#5b9b5b" stroke-width="1"/>
<text transform="matrix(0.9863,0,0,1,139.14,892.90)" font-size="11.2" fill="#101018" font-weight="normal" font-family="Liberation Sans" >20</text>
<text transform="matrix(0.9067,0,0,1,203.87,892.90)" font-size="11.2" fill="#101018" font-weight="normal" font-family="Liberation Sans" >NETLIST MODE:</text>
<rect x="284.10" y="881.30" width="63.60" height="16.50" fill="#d9d9d9" />
<path d="M284.6 897.8 V881.8 H347.7" fill="none" stroke="#808080" stroke-width="1"/>
<path d="M284.6 897.3 H347.2 V881.8" fill="none" stroke="#ffffff" stroke-width="1"/>
<text transform="matrix(1.0143,0,0,1,285.98,892.90)" font-size="11.2" fill="#101018" font-weight="normal" font-family="Liberation Sans" >spice</text>
<text transform="matrix(0.9978,0,0,1,350.03,892.90)" font-size="11.2" fill="#101018" font-weight="normal" font-family="Liberation Sans" xml:space="preserve">ouse = -190 -430 - sample.sym  selected:</text>
<rect x="559.00" y="2.00" width="586.00" height="909.00" fill="#2e2e2e" />
<rect x="560.50" y="3.30" width="583.30" height="904.70" fill="#5a5a5a" />
<rect x="561.00" y="3.30" width="582.00" height="1.20" fill="#7a7a7a" />
<rect x="563.00" y="6.00" width="579.00" height="16.00" fill="#7f7f7f" />
<g><path d="M565.3 10 H576.3 L577 20.6 H565 Z" fill="#f4f4f2" stroke="#d0d0cc" stroke-width="0.5"/><path d="M570.2 12 V14 M570 14.5 H572.5 M569.5 15.5 C568 16 567.5 17 569 18" stroke="#4caf3a" stroke-width="0.9" fill="none"/><path d="M570 14.5 H572" stroke="#2a4fa0" stroke-width="0.9"/><path d="M572 14.5 H573" stroke="#c02020" stroke-width="0.9"/><circle cx="571.5" cy="18.4" r="0.6" fill="#333"/><path d="M573.5 17.8 L578.8 11.4" stroke="#f08a24" stroke-width="2"/></g>
<text transform="matrix(0.9929,0,0,1,588.86,17.70)" font-size="12.3" fill="#e8e8e8" font-weight="normal" font-family="Liberation Sans" >sample_gschem.sym - lepton-schematic</text>
<rect x="1096.20" y="8.10" width="13.80" height="13.50" fill="#c9c9c9" />
<rect x="1096.20" y="8.10" width="13.80" height="1.00" fill="#ececec" />
<rect x="1096.20" y="8.10" width="1.00" height="13.50" fill="#e2e2e2" />
<rect x="1097.20" y="20.60" width="12.80" height="1.00" fill="#5a5a5a" />
<rect x="1100.00" y="17.10" width="7.00" height="1.90" fill="#000" />
<rect x="1112.10" y="8.10" width="13.90" height="13.50" fill="#c9c9c9" />
<rect x="1112.10" y="8.10" width="13.90" height="1.00" fill="#ececec" />
<rect x="1112.10" y="8.10" width="1.00" height="13.50" fill="#e2e2e2" />
<rect x="1113.10" y="20.60" width="12.90" height="1.00" fill="#5a5a5a" />
<rect x="1115.70" y="10.60" width="8.20" height="8.20" fill="none" stroke="#000" stroke-width="1.2"/>
<rect x="1115.10" y="10.00" width="9.40" height="2.10" fill="#000" />
<rect x="1128.20" y="8.10" width="13.70" height="13.50" fill="#c9c9c9" />
<rect x="1128.20" y="8.10" width="13.70" height="1.00" fill="#ececec" />
<rect x="1128.20" y="8.10" width="1.00" height="13.50" fill="#e2e2e2" />
<rect x="1129.20" y="20.60" width="12.70" height="1.00" fill="#5a5a5a" />
<path d="M1131.10 11.00 L1139.20 17.90 M1139.20 11.00 L1131.10 17.90" stroke="#000" stroke-width="1.6"/>
<rect x="563.00" y="22.00" width="579.00" height="886.00" fill="#edebe9" />
<rect x="563.00" y="46.00" width="578.00" height="1.00" fill="#c6c2bd" />
<rect x="563.00" y="79.00" width="578.00" height="1.00" fill="#c6c2bd" />
<rect x="568.00" y="29.00" width="1.50" height="2.50" fill="#9a9a9a" />
<rect x="568.00" y="33.00" width="1.50" height="2.50" fill="#9a9a9a" />
<rect x="568.00" y="37.00" width="1.50" height="2.50" fill="#9a9a9a" />
<rect x="568.00" y="60.00" width="1.50" height="2.50" fill="#9a9a9a" />
<rect x="568.00" y="64.00" width="1.50" height="2.50" fill="#9a9a9a" />
<rect x="568.00" y="68.00" width="1.50" height="2.50" fill="#9a9a9a" />
<text transform="matrix(1.1122,0,0,1,580.60,38.60)" font-size="13.2" fill="#1a1a1a" font-weight="normal" font-family="Liberation Sans" >File</text>
<rect x="580.60" y="40.20" width="8.97" height="1.00" fill="#1a1a1a" />
<text transform="matrix(1.1407,0,0,1,616.86,38.60)" font-size="13.2" fill="#1a1a1a" font-weight="normal" font-family="Liberation Sans" >Edit</text>
<rect x="616.86" y="40.20" width="10.04" height="1.00" fill="#1a1a1a" />
<text transform="matrix(1.0845,0,0,1,656.94,38.60)" font-size="13.2" fill="#1a1a1a" font-weight="normal" font-family="Liberation Sans" >View</text>
<rect x="656.94" y="40.20" width="9.55" height="1.00" fill="#1a1a1a" />
<text transform="matrix(1.0357,0,0,1,702.18,38.60)" font-size="13.2" fill="#1a1a1a" font-weight="normal" font-family="Liberation Sans" >Page</text>
<rect x="702.18" y="40.20" width="9.12" height="1.00" fill="#1a1a1a" />
<text transform="matrix(1.0570,0,0,1,748.17,38.60)" font-size="13.2" fill="#1a1a1a" font-weight="normal" font-family="Liberation Sans" >Add</text>
<rect x="748.17" y="40.20" width="9.31" height="1.00" fill="#1a1a1a" />
<text transform="matrix(1.1053,0,0,1,786.60,38.60)" font-size="13.2" fill="#1a1a1a" font-weight="normal" font-family="Liberation Sans" >Hierarchy</text>
<rect x="808.49" y="40.20" width="4.86" height="1.00" fill="#1a1a1a" />
<text transform="matrix(1.1492,0,0,1,863.77,38.60)" font-size="13.2" fill="#1a1a1a" font-weight="normal" font-family="Liberation Sans" >Attributes</text>
<rect x="873.89" y="40.20" width="4.21" height="1.00" fill="#1a1a1a" />
<text transform="matrix(1.1151,0,0,1,941.40,38.60)" font-size="13.2" fill="#1a1a1a" font-weight="normal" font-family="Liberation Sans" >Options</text>
<rect x="941.40" y="40.20" width="11.45" height="1.00" fill="#1a1a1a" />
<text transform="matrix(1.1974,0,0,1,1005.10,38.60)" font-size="13.2" fill="#1a1a1a" font-weight="normal" font-family="Liberation Sans" >Netlist</text>
<rect x="1005.10" y="40.20" width="11.41" height="1.00" fill="#1a1a1a" />
<text transform="matrix(1.1721,0,0,1,1061.83,38.60)" font-size="13.2" fill="#1a1a1a" font-weight="normal" font-family="Liberation Sans" >Help</text>
<rect x="1061.83" y="40.20" width="11.17" height="1.00" fill="#1a1a1a" />
<g>
<defs>
<linearGradient id="gpaper" x1="0" y1="0" x2="1" y2="1"><stop offset="0" stop-color="#fdfdfd"/><stop offset="1" stop-color="#d9d9d9"/></linearGradient>
<linearGradient id="gblue" x1="0" y1="0" x2="0" y2="1"><stop offset="0" stop-color="#3cb4e6"/><stop offset="1" stop-color="#1a66a8"/></linearGradient>
</defs>
<path d="M580.8 53.6 H592 L597.4 59.6 V73.8 H580.8 Z" fill="url(#gpaper)" stroke="#c8c8c8" stroke-width="0.9"/>
<path d="M592 53.6 V59.6 H597.4" fill="#e8e8e8" stroke="#bdbdbd" stroke-width="0.8"/>
<path d="M591.6 64.3 H596.3 V67 H599 V71.6 H596.3 V74.3 H591.6 V71.6 H588.9 V67 H591.6 Z" fill="#4bb526" stroke="#3a9a1c" stroke-width="0.6"/>
<path d="M619.5 55.5 L627 53.3 V72 L619.5 74.3 Z" fill="#eed49c" stroke="#c9a561" stroke-width="0.7"/>
<path d="M613.5 57 H621.5 V72.5 H613.5 Z" fill="#f4f4f4" stroke="#a8a8a8" stroke-width="0.6"/>
<path d="M615 59 H620 M615 61 H620 M615 63 H620 M615 65 H620 M615 67 H620" stroke="#c2c2c2" stroke-width="0.5"/>
<path d="M610 66 L613.5 63 V74 H611 Z" fill="#c4c4c4"/>
<rect x="639.5" y="54.3" width="18.8" height="19.7" rx="1.5" fill="#333333"/>
<rect x="642" y="55" width="13.8" height="1.6" fill="#3a6ea8"/>
<rect x="642" y="56.6" width="13.8" height="8.2" fill="#f2f2f2"/>
<rect x="642.6" y="66" width="12.6" height="7.2" fill="#c8c8c8"/>
<path d="M647 66.5 L652 73" stroke="#8a8aa0" stroke-width="1.2"/>
<rect x="669" y="55" width="1" height="18" fill="#a8a49e"/>
<path d="M681.4 61.6 L688.4 54.8 V58.3 C694.5 58.3 699 61 699 65.5 C699 69.2 696.5 72 693 73.6 C694.6 70.8 694.5 66.2 688.4 65.4 V68.8 Z" fill="url(#gblue)" stroke="#1a5f9c" stroke-width="0.5"/>
<path d="M728.6 61.6 L721.6 54.8 V58.3 C715.5 58.3 711 61 711 65.5 C711 69.2 713.5 72 717 73.6 C715.4 70.8 715.5 66.2 721.6 65.4 V68.8 Z" fill="url(#gblue)" stroke="#1a5f9c" stroke-width="0.5"/>
<rect x="741" y="55" width="1" height="18" fill="#a8a49e"/>
<circle cx="763.7" cy="61.4" r="5" fill="#e4e4e0" stroke="#3aa53a" stroke-width="1"/>
<path d="M755 61.4 H763 M763 57.8 V65 M763 59.5 L766 57.4 H770.8 M763 63.3 L766 65.3 H770.8" stroke="#222" stroke-width="1" fill="none"/>
<path d="M755 55 v2.5 h1.5 M757.5 55 v3 h1.5 v-3" stroke="#333" stroke-width="0.6" fill="none"/>
<path d="M761 67 H770 L765.5 71.8 Z" fill="#f08a24" stroke="#d06a10" stroke-width="0.5"/>
<path d="M786.5 65.3 H793.2 V57.4 H799.9" stroke="#23509a" stroke-width="1.3" fill="none"/>
<circle cx="786.5" cy="65.3" r="1.7" fill="#23509a"/><circle cx="799.9" cy="57.4" r="1.7" fill="#23509a"/>
<path d="M790.8 67 H799.9 L795.4 71.8 Z" fill="#f08a24" stroke="#d06a10" stroke-width="0.5"/>
<path d="M815.2 64.5 H822.5 V56.4 H830.5 M815.2 66.5 H824.6 V58.3 H830.5" stroke="#23509a" stroke-width="1.2" fill="none"/>
<path d="M821.1 67 H830.2 L825.7 71.8 Z" fill="#f08a24" stroke="#d06a10" stroke-width="0.5"/>
<rect x="842.8" y="54.8" width="20.6" height="11.5" rx="1.8" fill="#fff" stroke="#6a6a6a" stroke-width="1"/>
<text x="844.2" y="63.6" font-size="9.6" font-weight="bold" fill="#222" font-family="Liberation Sans" textLength="17.7" lengthAdjust="spacingAndGlyphs">Abc</text>
<path d="M847.8 69 H858 L852.9 73.9 Z" fill="#f08a24" stroke="#d06a10" stroke-width="0.5"/>
<rect x="873" y="55" width="1" height="18" fill="#a8a49e"/>
<rect x="880.2" y="49.1" width="28.9" height="28.7" fill="#ffffff"/>
<rect x="880.2" y="49.1" width="28" height="27.8" fill="#9c9c9c"/>
<rect x="881.2" y="50.1" width="27" height="26.8" fill="#d6d5d3"/>
<path d="M891.4 56.2 L899.7 64.9 L895.6 65.3 L898.5 70.6 L896.6 71.6 L893.8 66.5 L891.4 68.4 Z" fill="#e4e6e4" stroke="#556060" stroke-width="0.9"/>
<rect x="915" y="55" width="1" height="18" fill="#a8a49e"/>
</g>
<rect x="563.00" y="81.00" width="163.00" height="1.00" fill="#ffffff" />
<rect x="726.00" y="81.00" width="1.00" height="26.00" fill="#a39f9a" />
<rect x="563.00" y="107.00" width="561.00" height="1.00" fill="#ffffff" />
<text transform="matrix(1.1154,0,0,1,566.59,98.20)" font-size="13.2" fill="#1a1a1a" font-weight="normal" font-family="Liberation Sans" >sample_gschem.sym</text>
<rect x="709.4" y="88.8" width="11.8" height="10.2" fill="#f7942e"/><path d="M712.4 91.2 L718.2 96.8 M718.2 91.2 L712.4 96.8" stroke="#fff" stroke-width="1.6"/>
<rect x="563.00" y="108.00" width="561.00" height="753.00" fill="#000000" />
<path d="M571 108h1v749h-1zM584 108h1v749h-1zM596 108h1v749h-1zM608 108h1v749h-1zM621 108h1v749h-1zM633 108h1v749h-1zM646 108h1v749h-1zM658 108h1v749h-1zM670 108h1v749h-1zM683 108h1v749h-1zM695 108h1v749h-1zM708 108h1v749h-1zM720 108h1v749h-1zM732 108h1v749h-1zM745 108h1v749h-1zM757 108h1v749h-1zM769 108h1v749h-1zM782 108h1v749h-1zM794 108h1v749h-1zM807 108h1v749h-1zM819 108h1v749h-1zM831 108h1v749h-1zM844 108h1v749h-1zM856 108h1v749h-1zM868 108h1v749h-1zM881 108h1v749h-1zM893 108h1v749h-1zM906 108h1v749h-1zM918 108h1v749h-1zM930 108h1v749h-1zM943 108h1v749h-1zM955 108h1v749h-1zM968 108h1v749h-1zM980 108h1v749h-1zM992 108h1v749h-1zM1005 108h1v749h-1zM1017 108h1v749h-1zM1029 108h1v749h-1zM1042 108h1v749h-1zM1054 108h1v749h-1zM1067 108h1v749h-1zM1079 108h1v749h-1zM1091 108h1v749h-1zM1104 108h1v749h-1zM1116 108h1v749h-1zM621 113h503v1h-503zM571 125h553v1h-553zM571 138h553v1h-553zM571 150h553v1h-553zM571 162h553v1h-553zM621 175h503v1h-503zM571 187h553v1h-553zM571 200h553v1h-553zM571 212h553v1h-553zM571 224h553v1h-553zM621 237h503v1h-503zM571 249h553v1h-553zM571 261h553v1h-553zM571 274h553v1h-553zM571 286h553v1h-553zM621 299h503v1h-503zM571 311h553v1h-553zM571 323h553v1h-553zM571 336h553v1h-553zM571 348h553v1h-553zM621 360h503v1h-503zM571 373h553v1h-553zM571 385h553v1h-553zM571 398h553v1h-553zM571 410h553v1h-553zM621 422h503v1h-503zM571 435h553v1h-553zM571 447h553v1h-553zM571 460h553v1h-553zM571 472h553v1h-553zM621 484h503v1h-503zM571 497h553v1h-553zM571 509h553v1h-553zM571 521h553v1h-553zM571 534h553v1h-553zM621 546h503v1h-503zM571 559h553v1h-553zM571 571h553v1h-553zM571 583h553v1h-553zM571 596h553v1h-553zM621 608h503v1h-503zM571 620h553v1h-553zM571 633h553v1h-553zM571 645h553v1h-553zM571 658h553v1h-553zM621 670h503v1h-503zM571 682h553v1h-553zM571 695h553v1h-553zM571 707h553v1h-553zM571 719h553v1h-553zM621 732h503v1h-503zM571 744h553v1h-553zM571 757h553v1h-553zM571 769h553v1h-553zM571 781h553v1h-553zM621 794h503v1h-503zM571 806h553v1h-553zM571 819h553v1h-553zM571 831h553v1h-553zM571 843h553v1h-553zM621 856h503v1h-503z" fill="#1f1f1f"/>
<rect x="658.50" y="150.50" width="371.00" height="669.00" fill="none" stroke="#00ff00" stroke-width="1"/>
<line x1="708.50" y1="113.36" x2="708.50" y2="150.50" stroke="#ffffff" stroke-width="1" />
<rect x="703.22" y="108.86" width="9.00" height="9.00" fill="#ff0000" />
<text transform="matrix(1.1414,0,0,1,714.66,143.60)" font-size="17" fill="#ffff00" font-weight="normal" font-family="Liberation Sans" stroke="#ffff00" stroke-width="0.1">3</text>
<line x1="794.50" y1="113.36" x2="794.50" y2="150.50" stroke="#ffffff" stroke-width="1" />
<rect x="789.88" y="108.86" width="9.00" height="9.00" fill="#ff0000" />
<text transform="matrix(1.2160,0,0,1,800.90,143.60)" font-size="17" fill="#ffff00" font-weight="normal" font-family="Liberation Sans" stroke="#ffff00" stroke-width="0.1">8</text>
<line x1="881.50" y1="113.36" x2="881.50" y2="150.50" stroke="#ffffff" stroke-width="1" />
<rect x="876.54" y="108.86" width="9.00" height="9.00" fill="#ff0000" />
<text transform="matrix(1.2388,0,0,1,887.20,143.60)" font-size="17" fill="#ffff00" font-weight="normal" font-family="Liberation Sans" stroke="#ffff00" stroke-width="0.1">30</text>
<line x1="968.50" y1="113.36" x2="968.50" y2="150.50" stroke="#ffffff" stroke-width="1" />
<rect x="963.20" y="108.86" width="9.00" height="9.00" fill="#ff0000" />
<text transform="matrix(1.2196,0,0,1,973.72,143.60)" font-size="17" fill="#ffff00" font-weight="normal" font-family="Liberation Sans" stroke="#ffff00" stroke-width="0.1">19</text>
<line x1="621.36" y1="200.50" x2="646.12" y2="200.50" stroke="#ffffff" stroke-width="1" />
<rect x="616.26" y="195.52" width="9.00" height="9.00" fill="#ff0000" />
<circle cx="652.31" cy="200.02" r="6.19" fill="none" stroke="#00ff00" stroke-width="1.2"/>
<text transform="matrix(1.1848,0,0,1,622.99,193.52)" font-size="17" fill="#ffff00" font-weight="normal" font-family="Liberation Sans" stroke="#ffff00" stroke-width="0.1">24</text>
<line x1="621.36" y1="249.50" x2="658.50" y2="249.50" stroke="#ffffff" stroke-width="1" />
<rect x="616.26" y="245.04" width="9.00" height="9.00" fill="#ff0000" />
<text transform="matrix(1.2214,0,0,1,622.42,243.04)" font-size="17" fill="#ffff00" font-weight="normal" font-family="Liberation Sans" stroke="#ffff00" stroke-width="0.1">11</text>
<line x1="621.36" y1="274.50" x2="658.50" y2="274.50" stroke="#ffffff" stroke-width="1" />
<rect x="616.26" y="269.80" width="9.00" height="9.00" fill="#ff0000" />
<text transform="matrix(1.2411,0,0,1,622.39,267.80)" font-size="17" fill="#ffff00" font-weight="normal" font-family="Liberation Sans" stroke="#ffff00" stroke-width="0.1">12</text>
<line x1="621.36" y1="299.50" x2="658.50" y2="299.50" stroke="#ffffff" stroke-width="1" />
<rect x="616.26" y="294.56" width="9.00" height="9.00" fill="#ff0000" />
<text transform="matrix(1.2332,0,0,1,622.40,292.56)" font-size="17" fill="#ffff00" font-weight="normal" font-family="Liberation Sans" stroke="#ffff00" stroke-width="0.1">13</text>
<line x1="621.36" y1="323.50" x2="658.50" y2="323.50" stroke="#ffffff" stroke-width="1" />
<rect x="616.26" y="319.32" width="9.00" height="9.00" fill="#ff0000" />
<text transform="matrix(1.2152,0,0,1,622.43,317.32)" font-size="17" fill="#ffff00" font-weight="normal" font-family="Liberation Sans" stroke="#ffff00" stroke-width="0.1">14</text>
<line x1="621.36" y1="348.50" x2="658.50" y2="348.50" stroke="#ffffff" stroke-width="1" />
<rect x="616.26" y="344.08" width="9.00" height="9.00" fill="#ff0000" />
<text transform="matrix(1.2307,0,0,1,622.41,342.08)" font-size="17" fill="#ffff00" font-weight="normal" font-family="Liberation Sans" stroke="#ffff00" stroke-width="0.1">15</text>
<line x1="621.36" y1="373.50" x2="658.50" y2="373.50" stroke="#ffffff" stroke-width="1" />
<rect x="616.26" y="368.84" width="9.00" height="9.00" fill="#ff0000" />
<text transform="matrix(1.2332,0,0,1,622.40,366.84)" font-size="17" fill="#ffff00" font-weight="normal" font-family="Liberation Sans" stroke="#ffff00" stroke-width="0.1">16</text>
<line x1="621.36" y1="398.50" x2="658.50" y2="398.50" stroke="#ffffff" stroke-width="1" />
<rect x="616.26" y="393.60" width="9.00" height="9.00" fill="#ff0000" />
<text transform="matrix(1.2232,0,0,1,622.42,391.60)" font-size="17" fill="#ffff00" font-weight="normal" font-family="Liberation Sans" stroke="#ffff00" stroke-width="0.1">17</text>
<line x1="621.36" y1="422.50" x2="658.50" y2="422.50" stroke="#ffffff" stroke-width="1" />
<rect x="616.26" y="418.36" width="9.00" height="9.00" fill="#ff0000" />
<text transform="matrix(1.2326,0,0,1,622.40,416.36)" font-size="17" fill="#ffff00" font-weight="normal" font-family="Liberation Sans" stroke="#ffff00" stroke-width="0.1">18</text>
<line x1="621.36" y1="521.50" x2="658.50" y2="521.50" stroke="#ffffff" stroke-width="1" />
<rect x="616.26" y="517.40" width="9.00" height="9.00" fill="#ff0000" />
<path d="M658.50 515.71 L670.88 521.90 L658.50 528.09" fill="none" stroke="#00ff00" stroke-width="1.2"/>
<text transform="matrix(1.1902,0,0,1,622.98,515.40)" font-size="17" fill="#ffff00" font-weight="normal" font-family="Liberation Sans" stroke="#ffff00" stroke-width="0.1">21</text>
<line x1="621.36" y1="571.50" x2="646.12" y2="571.50" stroke="#ffffff" stroke-width="1" />
<rect x="616.26" y="566.92" width="9.00" height="9.00" fill="#ff0000" />
<circle cx="652.31" cy="571.42" r="6.19" fill="none" stroke="#00ff00" stroke-width="1.2"/>
<text transform="matrix(1.2094,0,0,1,622.97,564.92)" font-size="17" fill="#ffff00" font-weight="normal" font-family="Liberation Sans" stroke="#ffff00" stroke-width="0.1">22</text>
<line x1="621.36" y1="620.50" x2="646.12" y2="620.50" stroke="#ffffff" stroke-width="1" />
<rect x="616.26" y="616.44" width="9.00" height="9.00" fill="#ff0000" />
<circle cx="652.31" cy="620.94" r="6.19" fill="none" stroke="#00ff00" stroke-width="1.2"/>
<path d="M658.50 614.75 L670.88 620.94 L658.50 627.13" fill="none" stroke="#00ff00" stroke-width="1.2"/>
<text transform="matrix(1.2018,0,0,1,622.97,614.44)" font-size="17" fill="#ffff00" font-weight="normal" font-family="Liberation Sans" stroke="#ffff00" stroke-width="0.1">23</text>
<line x1="621.36" y1="719.50" x2="646.12" y2="719.50" stroke="#ffffff" stroke-width="1" />
<rect x="616.26" y="715.48" width="9.00" height="9.00" fill="#ff0000" />
<circle cx="652.31" cy="719.98" r="6.19" fill="none" stroke="#00ff00" stroke-width="1.2"/>
<text transform="matrix(1.1995,0,0,1,622.97,713.48)" font-size="17" fill="#ffff00" font-weight="normal" font-family="Liberation Sans" stroke="#ffff00" stroke-width="0.1">25</text>
<line x1="621.36" y1="769.50" x2="658.50" y2="769.50" stroke="#ffffff" stroke-width="1" />
<rect x="616.26" y="765.00" width="9.00" height="9.00" fill="#ff0000" />
<text transform="matrix(1.2059,0,0,1,622.97,763.00)" font-size="17" fill="#ffff00" font-weight="normal" font-family="Liberation Sans" stroke="#ffff00" stroke-width="0.1">29</text>
<line x1="1042.28" y1="200.50" x2="1067.04" y2="200.50" stroke="#ffffff" stroke-width="1" />
<rect x="1062.04" y="195.52" width="9.00" height="9.00" fill="#ff0000" />
<circle cx="1036.09" cy="200.02" r="6.19" fill="none" stroke="#00ff00" stroke-width="1.2"/>
<text transform="matrix(1.2861,0,0,1,1041.63,193.72)" font-size="17" fill="#ffff00" font-weight="normal" font-family="Liberation Sans" stroke="#ffff00" stroke-width="0.1">10</text>
<line x1="1029.90" y1="249.50" x2="1067.04" y2="249.50" stroke="#ffffff" stroke-width="1" />
<rect x="1062.04" y="245.04" width="9.00" height="9.00" fill="#ff0000" />
<path d="M1029.90 243.35 L1017.52 249.54 L1029.90 255.73" fill="none" stroke="#00ff00" stroke-width="1.2"/>
<text transform="matrix(1.2596,0,0,1,1042.22,243.24)" font-size="17" fill="#ffff00" font-weight="normal" font-family="Liberation Sans" stroke="#ffff00" stroke-width="0.1">26</text>
<line x1="1042.28" y1="299.50" x2="1067.04" y2="299.50" stroke="#ffffff" stroke-width="1" />
<rect x="1062.04" y="294.56" width="9.00" height="9.00" fill="#ff0000" />
<circle cx="1036.09" cy="299.06" r="6.19" fill="none" stroke="#00ff00" stroke-width="1.2"/>
<path d="M1029.90 292.87 L1017.52 299.06 L1029.90 305.25" fill="none" stroke="#00ff00" stroke-width="1.2"/>
<text transform="matrix(1.2279,0,0,1,1041.71,292.76)" font-size="17" fill="#ffff00" font-weight="normal" font-family="Liberation Sans" stroke="#ffff00" stroke-width="0.1">1</text>
<line x1="1029.90" y1="398.50" x2="1067.04" y2="398.50" stroke="#ffffff" stroke-width="1" />
<rect x="1062.04" y="393.60" width="9.00" height="9.00" fill="#ff0000" />
<text transform="matrix(1.2493,0,0,1,1042.22,391.80)" font-size="17" fill="#ffff00" font-weight="normal" font-family="Liberation Sans" stroke="#ffff00" stroke-width="0.1">6</text>
<line x1="1029.90" y1="447.50" x2="1067.04" y2="447.50" stroke="#ffffff" stroke-width="1" />
<rect x="1062.04" y="443.12" width="9.00" height="9.00" fill="#ff0000" />
<text transform="matrix(1.2681,0,0,1,1042.19,441.32)" font-size="17" fill="#ffff00" font-weight="normal" font-family="Liberation Sans" stroke="#ffff00" stroke-width="0.1">7</text>
<line x1="1029.90" y1="546.50" x2="1067.04" y2="546.50" stroke="#ffffff" stroke-width="1" />
<rect x="1062.04" y="542.16" width="9.00" height="9.00" fill="#ff0000" />
<text transform="matrix(1.2159,0,0,1,1042.47,540.36)" font-size="17" fill="#ffff00" font-weight="normal" font-family="Liberation Sans" stroke="#ffff00" stroke-width="0.1">5</text>
<line x1="1029.90" y1="596.50" x2="1067.04" y2="596.50" stroke="#ffffff" stroke-width="1" />
<rect x="1062.04" y="591.68" width="9.00" height="9.00" fill="#ff0000" />
<text transform="matrix(1.1440,0,0,1,1042.85,589.88)" font-size="17" fill="#ffff00" font-weight="normal" font-family="Liberation Sans" stroke="#ffff00" stroke-width="0.1">4</text>
<line x1="1029.90" y1="695.50" x2="1067.04" y2="695.50" stroke="#ffffff" stroke-width="1" />
<rect x="1062.04" y="690.72" width="9.00" height="9.00" fill="#ff0000" />
<text transform="matrix(1.2590,0,0,1,1042.22,688.92)" font-size="17" fill="#ffff00" font-weight="normal" font-family="Liberation Sans" stroke="#ffff00" stroke-width="0.1">28</text>
<line x1="1029.90" y1="744.50" x2="1067.04" y2="744.50" stroke="#ffffff" stroke-width="1" />
<rect x="1062.04" y="740.24" width="9.00" height="9.00" fill="#ff0000" />
<text transform="matrix(1.2675,0,0,1,1042.22,738.44)" font-size="17" fill="#ffff00" font-weight="normal" font-family="Liberation Sans" stroke="#ffff00" stroke-width="0.1">27</text>
<line x1="745.50" y1="819.02" x2="745.50" y2="856.16" stroke="#ffffff" stroke-width="1" />
<rect x="740.36" y="851.66" width="9.00" height="9.00" fill="#ff0000" />
<text transform="matrix(1.3816,0,0,1,750.02,839.00)" font-size="17" fill="#ffff00" font-weight="normal" font-family="Liberation Sans" stroke="#ffff00" stroke-width="0.1">2</text>
<line x1="844.50" y1="819.02" x2="844.50" y2="856.16" stroke="#ffffff" stroke-width="1" />
<rect x="839.40" y="851.66" width="9.00" height="9.00" fill="#ff0000" />
<text transform="matrix(1.2862,0,0,1,849.68,839.00)" font-size="17" fill="#ffff00" font-weight="normal" font-family="Liberation Sans" stroke="#ffff00" stroke-width="0.1">9</text>
<line x1="943.50" y1="819.02" x2="943.50" y2="856.16" stroke="#ffffff" stroke-width="1" />
<rect x="938.44" y="851.66" width="9.00" height="9.00" fill="#ff0000" />
<text transform="matrix(1.2766,0,0,1,948.61,839.00)" font-size="17" fill="#ffff00" font-weight="normal" font-family="Liberation Sans" stroke="#ffff00" stroke-width="0.1">20</text>
<text transform="matrix(1.0809,0,0,1,684.25,172.40)" font-size="22.6" fill="#00ff00" font-weight="normal" font-family="Liberation Sans" stroke="#00ff00" stroke-width="0.01">AV+</text>
<text transform="matrix(1.0392,0,0,1,762.70,172.40)" font-size="22.6" fill="#00ff00" font-weight="normal" font-family="Liberation Sans" stroke="#00ff00" stroke-width="0.01">VDD1</text>
<text transform="matrix(0.9774,0,0,1,859.88,172.80)" font-size="22.6" fill="#00ff00" font-weight="normal" font-family="Liberation Sans" stroke="#00ff00" stroke-width="0.01">CLK</text>
<text transform="matrix(1.0517,0,0,1,936.30,172.40)" font-size="22.6" fill="#00ff00" font-weight="normal" font-family="Liberation Sans" stroke="#00ff00" stroke-width="0.01">VDD2</text>
<text transform="matrix(0.9654,0,0,1,663.69,207.50)" font-size="22.6" fill="#00ff00" font-weight="normal" font-family="Liberation Sans" stroke="#00ff00" stroke-width="0.01">CS</text>
<text transform="matrix(0.9689,0,0,1,798.71,224.30)" font-size="22.6" fill="#00ff00" font-weight="normal" font-family="Liberation Sans" stroke="#00ff00" stroke-width="0.01">SAMPLE</text>
<text transform="matrix(0.9389,0,0,1,829.66,273.80)" font-size="22.6" fill="#00ff00" font-weight="normal" font-family="Liberation Sans" stroke="#00ff00" stroke-width="0.01">U?</text>
<text transform="matrix(0.9845,0,0,1,776.77,323.30)" font-size="22.6" fill="#00ff00" font-weight="normal" font-family="Liberation Sans" stroke="#00ff00" stroke-width="0.01">DEMO ONLY</text>
<text transform="matrix(1.0572,0,0,1,664.55,258.00)" font-size="22.6" fill="#00ff00" font-weight="normal" font-family="Liberation Sans" stroke="#00ff00" stroke-width="0.01">AD0</text>
<text transform="matrix(1.0627,0,0,1,664.55,282.80)" font-size="22.6" fill="#00ff00" font-weight="normal" font-family="Liberation Sans" stroke="#00ff00" stroke-width="0.01">AD1</text>
<text transform="matrix(1.0635,0,0,1,664.55,307.50)" font-size="22.6" fill="#00ff00" font-weight="normal" font-family="Liberation Sans" stroke="#00ff00" stroke-width="0.01">AD2</text>
<text transform="matrix(1.0599,0,0,1,664.55,332.30)" font-size="22.6" fill="#00ff00" font-weight="normal" font-family="Liberation Sans" stroke="#00ff00" stroke-width="0.01">AD3</text>
<text transform="matrix(1.0518,0,0,1,664.55,357.00)" font-size="22.6" fill="#00ff00" font-weight="normal" font-family="Liberation Sans" stroke="#00ff00" stroke-width="0.01">AD4</text>
<text transform="matrix(1.0518,0,0,1,664.55,381.80)" font-size="22.6" fill="#00ff00" font-weight="normal" font-family="Liberation Sans" stroke="#00ff00" stroke-width="0.01">AD4</text>
<text transform="matrix(1.0599,0,0,1,664.55,406.60)" font-size="22.6" fill="#00ff00" font-weight="normal" font-family="Liberation Sans" stroke="#00ff00" stroke-width="0.01">AD6</text>
<text transform="matrix(1.0635,0,0,1,664.55,431.30)" font-size="22.6" fill="#00ff00" font-weight="normal" font-family="Liberation Sans" stroke="#00ff00" stroke-width="0.01">AD7</text>
<text transform="matrix(0.9280,0,0,1,677.96,529.40)" font-size="22.6" fill="#00ff00" font-weight="normal" font-family="Liberation Sans" stroke="#00ff00" stroke-width="0.01">ALE</text>
<text transform="matrix(1.0656,0,0,1,662.82,579.00)" font-size="22.6" fill="#00ff00" font-weight="normal" font-family="Liberation Sans" stroke="#00ff00" stroke-width="0.01">RD/(DS)</text>
<text transform="matrix(1.0595,0,0,1,678.39,628.80)" font-size="22.6" fill="#00ff00" font-weight="normal" font-family="Liberation Sans" stroke="#00ff00" stroke-width="0.01">WR/(R/!W)</text>
<text transform="matrix(1.0680,0,0,1,662.57,728.50)" font-size="22.6" fill="#00ff00" font-weight="normal" font-family="Liberation Sans" stroke="#00ff00" stroke-width="0.01">INT</text>
<text transform="matrix(0.9716,0,0,1,663.00,778.10)" font-size="22.6" fill="#00ff00" font-weight="normal" font-family="Liberation Sans" stroke="#00ff00" stroke-width="0.01">RESET</text>
<text transform="matrix(1.0176,0,0,1,711.96,813.50)" font-size="22.6" fill="#00ff00" font-weight="normal" font-family="Liberation Sans" stroke="#00ff00" stroke-width="0.01">AGND</text>
<text transform="matrix(1.0361,0,0,1,801.78,813.30)" font-size="22.6" fill="#00ff00" font-weight="normal" font-family="Liberation Sans" stroke="#00ff00" stroke-width="0.01">DGND1</text>
<text transform="matrix(1.0497,0,0,1,901.15,813.30)" font-size="22.6" fill="#00ff00" font-weight="normal" font-family="Liberation Sans" stroke="#00ff00" stroke-width="0.01">DGND2</text>
<text transform="matrix(0.9947,0,0,1,979.36,207.90)" font-size="22.6" fill="#00ff00" font-weight="normal" font-family="Liberation Sans" stroke="#00ff00" stroke-width="0.01">RST</text>
<text transform="matrix(0.9986,0,0,1,929.55,258.00)" font-size="22.6" fill="#00ff00" font-weight="normal" font-family="Liberation Sans" stroke="#00ff00" stroke-width="0.01">MOTEN</text>
<text transform="matrix(1.0371,0,0,1,981.88,307.20)" font-size="22.6" fill="#00ff00" font-weight="normal" font-family="Liberation Sans" stroke="#00ff00" stroke-width="0.01">LA</text>
<text transform="matrix(1.1371,0,0,1,975.32,407.30)" font-size="22.6" fill="#00ff00" font-weight="normal" font-family="Liberation Sans" stroke="#00ff00" stroke-width="0.01">TX+</text>
<text transform="matrix(1.0317,0,0,1,987.28,456.50)" font-size="22.6" fill="#00ff00" font-weight="normal" font-family="Liberation Sans" stroke="#00ff00" stroke-width="0.01">TX-</text>
<text transform="matrix(1.1195,0,0,1,973.22,555.10)" font-size="22.6" fill="#00ff00" font-weight="normal" font-family="Liberation Sans" stroke="#00ff00" stroke-width="0.01">RX+</text>
<text transform="matrix(1.0121,0,0,1,985.42,605.30)" font-size="22.6" fill="#00ff00" font-weight="normal" font-family="Liberation Sans" stroke="#00ff00" stroke-width="0.01">RX-</text>
<text transform="matrix(0.9662,0,0,1,955.41,704.40)" font-size="22.6" fill="#00ff00" font-weight="normal" font-family="Liberation Sans" stroke="#00ff00" stroke-width="0.01">XTAL1</text>
<text transform="matrix(0.9667,0,0,1,955.41,753.10)" font-size="22.6" fill="#00ff00" font-weight="normal" font-family="Liberation Sans" stroke="#00ff00" stroke-width="0.01">XTAL2</text>
<rect x="859.80" y="152.20" width="43.10" height="1.80" fill="#008800" />
<rect x="664.80" y="756.30" width="70.90" height="1.50" fill="#00ff00" />
<rect x="1124.00" y="108.00" width="17.00" height="753.00" fill="#fafaf8" />
<rect x="1127.20" y="108.00" width="14.00" height="753.00" fill="#d6d4d2" />
<rect x="1127.20" y="108.00" width="14.00" height="14.30" fill="#edebe9" />
<path d="M1129.8 118.6 H1138.8 L1134.3 113.6 Z" fill="#111"/>
<rect x="1127.20" y="122.30" width="14.00" height="1.00" fill="#b7b3ae" />
<rect x="1127.20" y="846.90" width="14.00" height="13.30" fill="#edebe9" />
<path d="M1129.8 851.5 H1138.8 L1134.3 856.5 Z" fill="#111"/>
<rect x="1127.20" y="846.40" width="14.00" height="1.00" fill="#b7b3ae" />
<rect x="1127.20" y="573.30" width="14.00" height="31.00" fill="#b7b3ae" />
<rect x="1127.70" y="574.30" width="13.00" height="29.30" fill="#edebe9" />
<rect x="1126.90" y="108.00" width="1.00" height="753.00" fill="#a9a5a0" />
<rect x="563.00" y="861.00" width="561.00" height="18.00" fill="#fafaf8" />
<rect x="563.00" y="864.20" width="561.00" height="15.00" fill="#d6d4d2" />
<rect x="563.00" y="864.20" width="561.00" height="1.00" fill="#9a9690" />
<rect x="563.60" y="865.00" width="13.70" height="13.70" fill="#edebe9" />
<path d="M568.5 871.5 L573 867 V876 Z" fill="#111"/>
<rect x="1109.70" y="865.00" width="13.70" height="13.70" fill="#edebe9" />
<path d="M1119 871.5 L1114.5 867 V876 Z" fill="#111"/>
<rect x="753.30" y="865.00" width="13.90" height="13.70" fill="#edebe9" />
<rect x="577.30" y="865.00" width="1.00" height="14.00" fill="#b7b3ae" />
<rect x="1109.00" y="865.00" width="1.00" height="14.00" fill="#b7b3ae" />
<rect x="752.60" y="865.00" width="1.00" height="14.00" fill="#b7b3ae" />
<rect x="767.20" y="865.00" width="1.00" height="14.00" fill="#b7b3ae" />
<rect x="563.00" y="878.70" width="578.00" height="1.30" fill="#b7b3ae" />
<rect x="676.30" y="882.00" width="1.00" height="25.00" fill="#b5b1ab" />
<rect x="745.50" y="882.00" width="1.00" height="25.00" fill="#b5b1ab" />
<rect x="817.50" y="882.00" width="1.00" height="25.00" fill="#b5b1ab" />
<text transform="matrix(1.0965,0,0,1,572.57,899.00)" font-size="13.2" fill="#1a1a1a" font-weight="normal" font-family="Liberation Sans" >Grid(100, 100)</text>
<text transform="matrix(0.9800,0,0,1,686.24,899.00)" font-size="13.2" fill="#2a8a2a" font-weight="normal" font-family="Liberation Sans" >RB: </text>
<text transform="matrix(1.2521,0,0,1,710.82,899.00)" font-size="13.2" fill="#1f7f1f" font-weight="bold" font-family="Liberation Sans" >ON</text>
<text transform="matrix(0.9800,0,0,1,755.14,899.00)" font-size="13.2" fill="#8a2a8a" font-weight="normal" font-family="Liberation Sans" >MN: </text>
<text transform="matrix(1.2521,0,0,1,782.82,899.00)" font-size="13.2" fill="#7a1a7a" font-weight="bold" font-family="Liberation Sans" >ON</text>
<text transform="matrix(1.0902,0,0,1,1052.35,899.00)" font-size="13.2" fill="#1a1a1a" font-weight="normal" font-family="Liberation Sans" >Select Mode</text>
</svg>
</body></html>
